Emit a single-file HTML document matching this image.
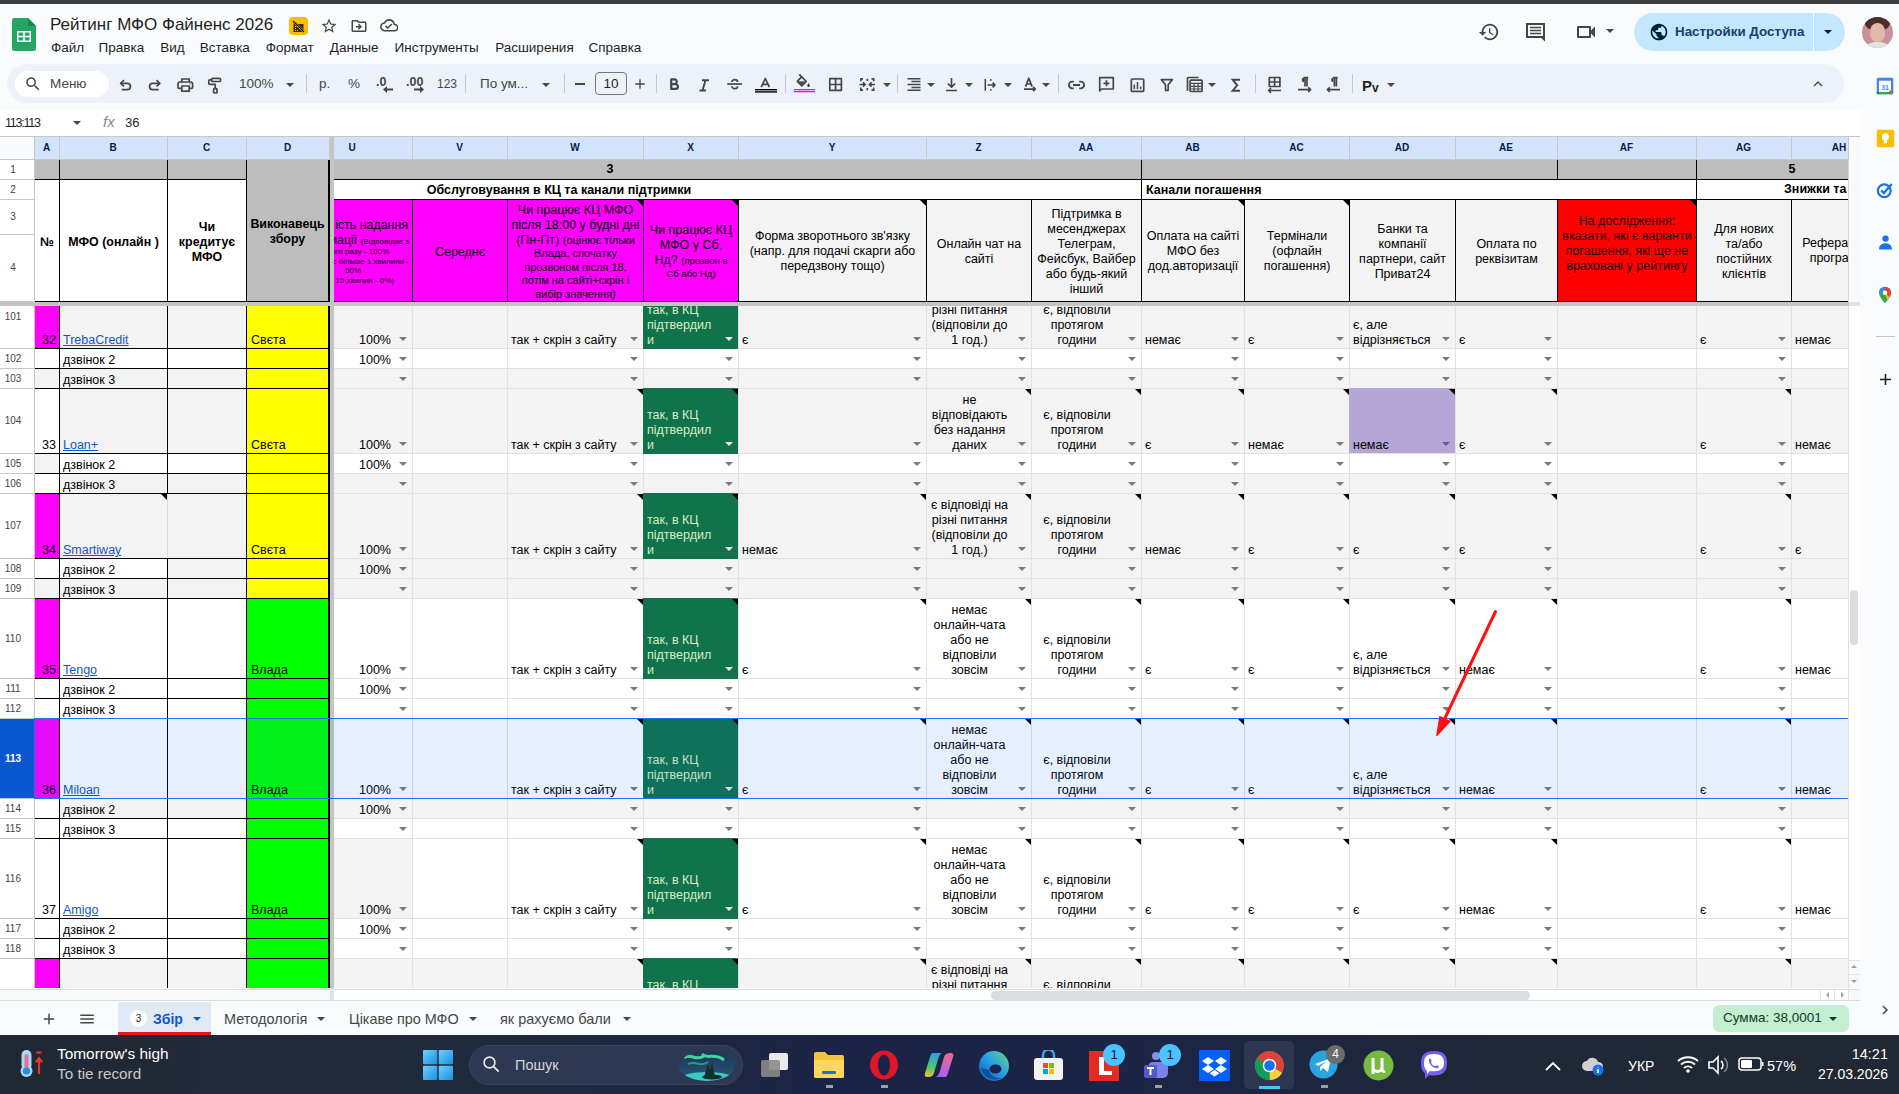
<!DOCTYPE html><html><head><meta charset="utf-8"><title>Sheets</title><style>
*{margin:0;padding:0;box-sizing:border-box}
html,body{width:1899px;height:1094px;overflow:hidden;background:#f9fbfd;font-family:"Liberation Sans",sans-serif;position:relative}
.a{position:absolute}
.t{position:absolute;display:flex;flex-direction:column;font-size:12.5px;line-height:15px;color:#000;overflow:hidden;white-space:normal}
.dd{position:absolute;width:0;height:0;border-left:4px solid transparent;border-right:4px solid transparent;border-top:4px solid #7a7a7a}
.cm{position:absolute;width:0;height:0;border-left:6px solid transparent;border-top:6px solid #000}
.ui{position:absolute;font-family:"Liberation Sans",sans-serif;color:#1f1f1f;white-space:nowrap}
</style></head><body>
<div style="position:absolute;left:0px;top:0px;width:1899px;height:4px;background:#3c3c3c;"></div>
<div style="position:absolute;left:0px;top:4px;width:1899px;height:1px;background:#ffffff;"></div>
<div style="position:absolute;left:0px;top:110px;width:1860px;height:26px;background:#ffffff;"></div>
<svg class="a" style="left:12px;top:18px" width="24" height="33" viewBox="0 0 24 33"><path d="M2.5 0H16l8 8v22.5A2.5 2.5 0 0 1 21.5 33h-19A2.5 2.5 0 0 1 0 30.5v-28A2.5 2.5 0 0 1 2.5 0z" fill="#23a566"/><path d="M16 0v8h8z" fill="#16884a"/><path d="M5 13h14v11H5z M6.5 14.5v3.2h4.7v-3.2z M12.8 14.5v3.2h4.7v-3.2z M6.5 19.3v3.2h4.7v-3.2z M12.8 19.3v3.2h4.7v-3.2z" fill="#fff" fill-rule="evenodd"/></svg>
<div class="ui" style="left:50px;top:15px;font-size:17px;line-height:17px;color:#1f1f1f;line-height:20px">Рейтинг МФО Файненс 2026</div>
<div class="a" style="left:289px;top:17px;width:19px;height:18px;border-radius:4px;background:#fbbc04"></div>
<svg class="a" style="left:292px;top:20px" width="13" height="13" viewBox="0 0 13 13"><path d="M1.5 2.5h3l1 1.5h6v8h-10z" fill="#3c2f00"/><path d="M1 1l11 11" stroke="#fbbc04" stroke-width="2.2"/><path d="M1 1l11 11" stroke="#111" stroke-width="1.2"/><path d="M3 6h1v1H3zM5 6h1v1H5zM3 8h1v1H3zM7 8h1v1H7zM3 10h1v1H3zM5 10h1v1H5z" fill="#fbbc04"/></svg>
<svg class="a" style="left:320px;top:17px" width="18" height="18" viewBox="0 0 24 24"><path d="M22 9.24l-7.19-.62L12 2 9.19 8.63 2 9.24l5.46 4.73L5.82 21 12 17.27 18.18 21l-1.63-7.03L22 9.24zM12 15.4l-3.76 2.27 1-4.28-3.32-2.88 4.38-.38L12 6.1l1.71 4.04 4.38.38-3.32 2.88 1 4.28L12 15.4z" fill="#444746" /></svg>
<svg class="a" style="left:349.5px;top:16.5px" width="18" height="18" viewBox="0 0 24 24"><path d="M20 6h-8l-2-2H4c-1.1 0-1.99.9-1.99 2L2 18c0 1.1.9 2 2 2h16c1.1 0 2-.9 2-2V8c0-1.1-.9-2-2-2zm0 12H4V6h5.17l2 2H20v10zm-7.84-6H8v2h4.16l-1.59 1.59L11.99 17 16 13.01 11.99 9l-1.41 1.41L12.16 12z" fill="#444746" /></svg>
<svg class="a" style="left:379.5px;top:16px" width="18.5" height="18.5" viewBox="0 0 24 24"><path d="M19.35 10.04C18.67 6.59 15.64 4 12 4 9.11 4 6.6 5.64 5.35 8.04 2.34 8.36 0 10.91 0 14c0 3.31 2.69 6 6 6h13c2.76 0 5-2.24 5-5 0-2.64-2.05-4.78-4.65-4.96zM19 18H6c-2.21 0-4-1.79-4-4 0-2.05 1.53-3.76 3.56-3.97l1.07-.11.5-.95C8.08 7.14 9.94 6 12 6c2.62 0 4.88 1.86 5.39 4.43l.3 1.5 1.53.11c1.56.1 2.78 1.41 2.78 2.96 0 1.65-1.35 3-3 3zm-9-3.82l-2.09-2.09L6.5 13.5 10 17l6.01-6.01-1.41-1.41z" fill="#444746" /></svg>
<div class="ui" style="left:51px;top:40px;font-size:13.5px;line-height:13.5px;color:#1f1f1f;line-height:16px">Файл</div>
<div class="ui" style="left:98.6px;top:40px;font-size:13.5px;line-height:13.5px;color:#1f1f1f;line-height:16px">Правка</div>
<div class="ui" style="left:160.3px;top:40px;font-size:13.5px;line-height:13.5px;color:#1f1f1f;line-height:16px">Вид</div>
<div class="ui" style="left:199.7px;top:40px;font-size:13.5px;line-height:13.5px;color:#1f1f1f;line-height:16px">Вставка</div>
<div class="ui" style="left:265.8px;top:40px;font-size:13.5px;line-height:13.5px;color:#1f1f1f;line-height:16px">Формат</div>
<div class="ui" style="left:329.8px;top:40px;font-size:13.5px;line-height:13.5px;color:#1f1f1f;line-height:16px">Данные</div>
<div class="ui" style="left:394.5px;top:40px;font-size:13.5px;line-height:13.5px;color:#1f1f1f;line-height:16px">Инструменты</div>
<div class="ui" style="left:495.2px;top:40px;font-size:13.5px;line-height:13.5px;color:#1f1f1f;line-height:16px">Расширения</div>
<div class="ui" style="left:588.4px;top:40px;font-size:13.5px;line-height:13.5px;color:#1f1f1f;line-height:16px">Справка</div>
<svg class="a" style="left:1478px;top:21px" width="22" height="22" viewBox="0 0 24 24"><path d="M13 3c-4.97 0-9 4.03-9 9H1l3.89 3.89.07.14L9 12H6c0-3.87 3.13-7 7-7s7 3.13 7 7-3.13 7-7 7c-1.93 0-3.68-.79-4.94-2.06l-1.42 1.42C8.27 19.99 10.51 21 13 21c4.97 0 9-4.03 9-9s-4.03-9-9-9zm-1 5v5l4.28 2.54.72-1.21-3.5-2.08V8H12z" fill="#444746" /></svg>
<svg class="a" style="left:1520px;top:18px" width="30" height="28" viewBox="1520 18 30 28"><path d="M1527 24 H1544 V37 H1527 Z" fill="none" stroke="#444746" stroke-width="2"/><path d="M1530 27.5 H1541 M1530 30.5 H1541 M1530 33.5 H1541" stroke="#444746" stroke-width="1.6"/><path d="M1540 37 H1545 V41.5 Z" fill="#444746"/></svg>
<svg class="a" style="left:1574px;top:20px" width="24" height="24" viewBox="0 0 24 24"><path d="M17 10.5V7c0-.55-.45-1-1-1H4c-.55 0-1 .45-1 1v10c0 .55.45 1 1 1h12c.55 0 1-.45 1-1v-3.5l4 4v-11l-4 4zM15 16H5V8h10v8z" fill="#444746" /></svg>
<div class="a" style="left:1606px;top:29px;width:0;height:0;border-left:4px solid transparent;border-right:4px solid transparent;border-top:4px solid #444746"></div>
<div class="a" style="left:1634px;top:13px;width:211px;height:38px;border-radius:19px;background:#c2e7ff"></div>
<div style="position:absolute;left:1813px;top:13px;width:1px;height:38px;background:#f9fbfd;"></div>
<svg class="a" style="left:1649px;top:22px" width="20" height="20" viewBox="0 0 24 24"><path d="M12 2C6.48 2 2 6.48 2 12s4.48 10 10 10 10-4.48 10-10S17.52 2 12 2zm-1 17.93c-3.95-.49-7-3.85-7-7.93 0-.62.08-1.21.21-1.79L9 15v1c0 1.1.9 2 2 2v1.93zm6.9-2.54c-.26-.81-1-1.39-1.9-1.39h-1v-3c0-.55-.45-1-1-1H8v-2h2c.55 0 1-.45 1-1V7h2c1.1 0 2-.9 2-2v-.41c2.93 1.19 5 4.06 5 7.41 0 2.08-.8 3.97-2.1 5.39z" fill="#001d35" /></svg>
<div class="ui" style="left:1675px;top:24px;font-size:13.4px;line-height:13.4px;color:#17406c;font-weight:bold;line-height:16px">Настройки Доступа</div>
<div class="a" style="left:1824px;top:30px;width:0;height:0;border-left:4px solid transparent;border-right:4px solid transparent;border-top:4px solid #001d35"></div>
<div class="a" style="left:1862px;top:17px;width:31px;height:31px;border-radius:50%;overflow:hidden;background:#c9929a"><div class="a" style="left:3px;top:-2px;width:25px;height:16px;border-radius:50%;background:#4a3028"></div><div class="a" style="left:8px;top:6px;width:15px;height:19px;border-radius:45%;background:#e2b8a8"></div><div class="a" style="left:4px;top:25px;width:23px;height:10px;border-radius:50% 50% 0 0;background:#d8e6e0"></div></div>
<div class="a" style="left:7px;top:64px;width:1837px;height:39px;border-radius:20px;background:#edf2fa"></div>
<div class="a" style="left:15px;top:71px;width:94px;height:26px;border-radius:13px;background:#fff"></div>
<svg class="a" style="left:24px;top:75px" width="18" height="18" viewBox="0 0 24 24"><path d="M15.5 14h-.79l-.28-.27C15.41 12.59 16 11.11 16 9.5 16 5.91 13.09 3 9.5 3S3 5.91 3 9.5 5.91 16 9.5 16c1.61 0 3.09-.59 4.23-1.57l.27.28v.79l5 4.99L20.49 19l-4.99-5zm-6 0C7.01 14 5 11.99 5 9.5S7.01 5 9.5 5 14 7.01 14 9.5 11.99 14 9.5 14z" fill="#444746" /></svg>
<div class="ui" style="left:50px;top:76px;font-size:13.5px;line-height:13.5px;color:#444746;line-height:16px">Меню</div>
<svg class="a" style="left:0;top:0" width="1899" height="110" viewBox="0 0 1899 110"><path d="M124 80.2 L120.6 83.3 L124 86.4" fill="none" stroke="#444746" stroke-width="1.7" stroke-linecap="butt" stroke-linejoin="round"/><path d="M121 83.3 H127.3 A3.15 3.15 0 0 1 127.3 89.6 H121.8" fill="none" stroke="#444746" stroke-width="1.7" stroke-linecap="butt" stroke-linejoin="round"/><path d="M156.5 80.2 L159.9 83.3 L156.5 86.4" fill="none" stroke="#444746" stroke-width="1.7" stroke-linecap="butt" stroke-linejoin="round"/><path d="M159.5 83.3 H152.7 A3.15 3.15 0 0 0 152.7 89.6 H158.7" fill="none" stroke="#444746" stroke-width="1.7" stroke-linecap="butt" stroke-linejoin="round"/><path d="M181.8 82 V79 H189.2 V82" fill="none" stroke="#444746" stroke-width="1.7" stroke-linecap="butt" stroke-linejoin="round"/><path d="M181.5 88.3 H179 A1 1 0 0 1 178 87.3 V83.8 A1.8 1.8 0 0 1 179.8 82 H190.8 A1.8 1.8 0 0 1 192.6 83.8 V87.3 A1 1 0 0 1 191.6 88.3 H189.2" fill="none" stroke="#444746" stroke-width="1.7" stroke-linecap="butt" stroke-linejoin="round"/><path d="M181.8 86 H189.2 V91.2 H181.8 Z" fill="none" stroke="#444746" stroke-width="1.7" stroke-linecap="butt" stroke-linejoin="round"/><rect x="189.5" y="83.3" width="1.2" height="1" fill="#444746"/><rect x="211.7" y="78.3" width="8.8" height="3.2" rx="1" fill="none" stroke="#444746" stroke-width="1.7" stroke-linecap="butt" stroke-linejoin="round"/><path d="M211.7 79.9 H209.6 A0.8 0.8 0 0 0 208.8 80.7 V83.6 A0.8 0.8 0 0 0 209.6 84.4 H215.2 V88.6" fill="none" stroke="#444746" stroke-width="1.7" stroke-linecap="butt" stroke-linejoin="round"/><rect x="213.6" y="88.6" width="3.4" height="4.4" rx="0.8" fill="none" stroke="#444746" stroke-width="1.7" stroke-linecap="butt" stroke-linejoin="round"/><path d="M671.2 79.3 H675 A2.5 2.5 0 0 1 675 84.1 H671.2 Z M671.2 84.1 H675.6 A2.4 2.4 0 0 1 675.6 88.9 H671.2 Z" fill="none" stroke="#444746" stroke-width="2.2" stroke-linejoin="round"/><path d="M702 80.2 H709 M699.5 90.5 H706 M705.5 80.2 L702.5 90.5" fill="none" stroke="#444746" stroke-width="1.9"/><path d="M727.3 84 H742" fill="none" stroke="#444746" stroke-width="1.7" stroke-linecap="butt" stroke-linejoin="round"/><path d="M731.8 82 A2.9 2.4 0 0 1 737.6 82" fill="none" stroke="#444746" stroke-width="1.7" stroke-linecap="butt" stroke-linejoin="round"/><path d="M731.8 86.2 A2.9 2.4 0 0 0 737.6 86.2" fill="none" stroke="#444746" stroke-width="1.7" stroke-linecap="butt" stroke-linejoin="round"/><path d="M761.2 87.2 L765.3 78.5 L769.4 87.2 M762.6 84.3 H768" fill="none" stroke="#444746" stroke-width="1.7" stroke-linecap="butt" stroke-linejoin="round"/><rect x="755" y="89" width="22" height="1.4" fill="#000"/><rect x="755" y="91.2" width="22" height="1.4" fill="#000"/><path d="M799.3 74.3 L806.2 81.5 L801.8 85.8 L797.3 81.3 L801.3 77.2" fill="none" stroke="#444746" stroke-width="1.7" stroke-linecap="butt" stroke-linejoin="round"/><path d="M797.8 81.3 L801.8 85.2 L805.6 81.5 Z" fill="#444746"/><path d="M808.6 83.1 C807.5 84.6 807.3 85.2 807.3 85.8 A1.3 1.3 0 0 0 809.9 85.8 C809.9 85.2 809.7 84.6 808.6 83.1 Z" fill="#444746"/><rect x="794" y="89" width="21" height="1.3" fill="#ff00ff"/><rect x="794" y="91" width="21" height="1.3" fill="#ff00ff"/><rect x="829.8" y="78.7" width="11.6" height="11.6" fill="none" stroke="#444746" stroke-width="1.7" stroke-linecap="butt" stroke-linejoin="round"/><path d="M835.6 78.7 V90.3 M829.8 84.5 H841.4" fill="none" stroke="#444746" stroke-width="1.7" stroke-linecap="butt" stroke-linejoin="round"/><path d="M863 78.8 H860.8 V81.3 M860.8 87.6 V90.2 H863 M871.5 78.8 H873.7 V81.3 M873.7 87.6 V90.2 H871.5" fill="none" stroke="#444746" stroke-width="1.7" stroke-linecap="butt" stroke-linejoin="round"/><path d="M859.5 84.5 H865 M863 82.3 L865.2 84.5 L863 86.7 M875 84.5 H869.5 M871.5 82.3 L869.3 84.5 L871.5 86.7" fill="none" stroke="#444746" stroke-width="1.7" stroke-linecap="butt" stroke-linejoin="round"/><path d="M867.3 78.8 V81 M867.3 88 V90.2" fill="none" stroke="#444746" stroke-width="1.7" stroke-linecap="butt" stroke-linejoin="round"/><path d="M907.5 78.7 H920.5 M911.5 81.6 H920.5 M907.5 84.5 H920.5 M911.5 87.4 H920.5 M907.5 90.2 H920.5" fill="none" stroke="#444746" stroke-width="1.5"/><path d="M951.5 78 V87 M947.8 83.5 L951.5 87.2 L955.2 83.5 M946 90.5 H957" fill="none" stroke="#444746" stroke-width="1.7" stroke-linecap="butt" stroke-linejoin="round"/><path d="M985.3 79 V90.7" fill="none" stroke="#444746" stroke-width="1.6"/><path d="M990.8 79 V81 M990.8 89 V90.7" fill="none" stroke="#444746" stroke-width="1.4"/><path d="M987.5 85 H994.8 M992.6 82.6 L995 85 L992.6 87.4" fill="none" stroke="#444746" stroke-width="1.7" stroke-linecap="butt" stroke-linejoin="round"/><path d="M1025.5 86.6 L1028.8 78.2 L1032.1 86.6 M1026.6 84 H1031" fill="none" stroke="#444746" stroke-width="1.7" stroke-linecap="butt" stroke-linejoin="round"/><path d="M1024 89.1 H1035 M1033 87 L1035.3 89.1 L1033 91.2" fill="none" stroke="#444746" stroke-width="1.7" stroke-linecap="butt" stroke-linejoin="round"/><path d="M1073.8 81.6 H1072.3 A3.4 3.4 0 0 0 1072.3 88.4 H1073.8 M1079.2 81.6 H1080.7 A3.4 3.4 0 0 1 1080.7 88.4 H1079.2 M1073 85 H1080" fill="none" stroke="#444746" stroke-width="1.9"/><path d="M1099.7 90.8 V77.7 H1113.3 V89 H1101.6 Z" fill="none" stroke="#444746" stroke-width="1.7" stroke-linecap="butt" stroke-linejoin="round"/><path d="M1106.5 80.3 V86.3 M1103.5 83.3 H1109.5" fill="none" stroke="#444746" stroke-width="1.7" stroke-linecap="butt" stroke-linejoin="round"/><rect x="1131.3" y="79" width="12.4" height="12.4" rx="1" fill="none" stroke="#444746" stroke-width="1.7" stroke-linecap="butt" stroke-linejoin="round"/><path d="M1134.3 84.5 V89.2 M1137.5 82 V89.2 M1140.7 86.6 V89.2" fill="none" stroke="#444746" stroke-width="1.5"/><path d="M1161.3 79.6 H1172.4 L1168.2 84.8 V90.3 H1165.5 V84.8 Z" fill="none" stroke="#444746" stroke-width="1.7" stroke-linecap="butt" stroke-linejoin="round"/><path d="M1187.5 90.7 V78.3 A0.8 0.8 0 0 1 1188.3 77.5 H1198.6" fill="none" stroke="#444746" stroke-width="1.7" stroke-linecap="butt" stroke-linejoin="round"/><rect x="1190.1" y="80.2" width="12" height="11.3" rx="1" fill="none" stroke="#444746" stroke-width="1.7" stroke-linecap="butt" stroke-linejoin="round"/><path d="M1190.1 83.3 H1202.1 M1190.1 86.3 H1202.1 M1190.1 89 H1202.1 M1194.1 83.3 V91.5 M1198.1 83.3 V91.5" fill="none" stroke="#444746" stroke-width="1.2"/><path d="M1240 79.7 H1232.6 L1237.2 85.3 L1232.6 90.7 H1240" fill="none" stroke="#444746" stroke-width="1.9"/><rect x="1269.3" y="77.5" width="10.6" height="9" fill="none" stroke="#444746" stroke-width="1.7" stroke-linecap="butt" stroke-linejoin="round"/><path d="M1274.6 77.5 V86.5 M1269.3 82 H1279.9" fill="none" stroke="#444746" stroke-width="1.7" stroke-linecap="butt" stroke-linejoin="round"/><path d="M1268.6 90.5 H1281 M1271 88.2 L1268.6 90.5 L1271 92.8" fill="none" stroke="#444746" stroke-width="1.7" stroke-linecap="butt" stroke-linejoin="round"/><path d="M1303.6 77.6 H1308.3 M1305 77.6 V86.4 M1307 77.6 V86.4" fill="none" stroke="#444746" stroke-width="1.7" stroke-linecap="butt" stroke-linejoin="round"/><path d="M1304 77.6 A2.3 2.3 0 0 0 1304 82.2 Z" fill="#444746"/><path d="M1298 89.6 H1310.5 M1308.2 87.3 L1310.6 89.6 L1308.2 91.9" fill="none" stroke="#444746" stroke-width="1.7" stroke-linecap="butt" stroke-linejoin="round"/><path d="M1333 77.6 H1337.7 M1334.4 77.6 V86.4 M1336.4 77.6 V86.4" fill="none" stroke="#444746" stroke-width="1.7" stroke-linecap="butt" stroke-linejoin="round"/><path d="M1333.4 77.6 A2.3 2.3 0 0 0 1333.4 82.2 Z" fill="#444746"/><path d="M1340 89.6 H1327.5 M1329.8 87.3 L1327.4 89.6 L1329.8 91.9" fill="none" stroke="#444746" stroke-width="1.7" stroke-linecap="butt" stroke-linejoin="round"/></svg>
<div class="ui" style="left:239px;top:77px;font-size:13.5px;line-height:13.5px;color:#444746;line-height:14px">100%</div>
<div class="a" style="left:286px;top:83px;width:0;height:0;border-left:4px solid transparent;border-right:4px solid transparent;border-top:4px solid #444746"></div>
<div style="position:absolute;left:306px;top:74px;width:1px;height:19px;background:#c7c7c7;"></div>
<div class="ui" style="left:319px;top:77px;font-size:13.5px;line-height:13.5px;color:#444746;line-height:14px">р.</div>
<div class="ui" style="left:348px;top:77px;font-size:13.5px;line-height:13.5px;color:#444746;line-height:14px">%</div>
<div class="ui" style="left:376px;top:76px;font-size:12.5px;line-height:12.5px;color:#444746;line-height:13px;font-weight:bold">.0</div>
<svg class="a" style="left:383px;top:86px" width="10" height="7" viewBox="0 0 10 7"><path d="M4 0L0 3.5 4 7V4.5h6v-2H4z" fill="#444746" /></svg>
<div class="ui" style="left:406px;top:76px;font-size:12.5px;line-height:12.5px;color:#444746;line-height:13px;font-weight:bold">.00</div>
<svg class="a" style="left:414px;top:86px" width="10" height="7" viewBox="0 0 10 7"><path d="M6 0l4 3.5L6 7V4.5H0v-2h6z" fill="#444746" /></svg>
<div class="ui" style="left:437px;top:78px;font-size:12px;line-height:12px;color:#444746;line-height:13px">123</div>
<div style="position:absolute;left:465px;top:74px;width:1px;height:19px;background:#c7c7c7;"></div>
<div class="ui" style="left:480px;top:77px;font-size:13.5px;line-height:13.5px;color:#444746;line-height:14px">По ум...</div>
<div class="a" style="left:542px;top:83px;width:0;height:0;border-left:4px solid transparent;border-right:4px solid transparent;border-top:4px solid #444746"></div>
<div style="position:absolute;left:564px;top:74px;width:1px;height:19px;background:#c7c7c7;"></div>
<div style="position:absolute;left:575px;top:83px;width:10px;height:2px;background:#444746;"></div>
<div class="a" style="left:595px;top:72px;width:32px;height:23px;border:1px solid #747775;border-radius:4px;font-size:13.5px;line-height:21px;text-align:center;color:#1f1f1f">10</div>
<svg class="a" style="left:632px;top:76px" width="16" height="16" viewBox="0 0 24 24"><path d="M19 13h-6v6h-2v-6H5v-2h6V5h2v6h6v2z" fill="#444746" /></svg>
<div style="position:absolute;left:656px;top:74px;width:1px;height:19px;background:#c7c7c7;"></div>
<div style="position:absolute;left:785px;top:74px;width:1px;height:19px;background:#c7c7c7;"></div>
<div class="a" style="left:883px;top:83px;width:0;height:0;border-left:4px solid transparent;border-right:4px solid transparent;border-top:4px solid #444746"></div>
<div style="position:absolute;left:897px;top:74px;width:1px;height:19px;background:#c7c7c7;"></div>
<div class="a" style="left:927px;top:83px;width:0;height:0;border-left:4px solid transparent;border-right:4px solid transparent;border-top:4px solid #444746"></div>
<div class="a" style="left:965px;top:83px;width:0;height:0;border-left:4px solid transparent;border-right:4px solid transparent;border-top:4px solid #444746"></div>
<div class="a" style="left:1004px;top:83px;width:0;height:0;border-left:4px solid transparent;border-right:4px solid transparent;border-top:4px solid #444746"></div>
<div class="a" style="left:1042px;top:83px;width:0;height:0;border-left:4px solid transparent;border-right:4px solid transparent;border-top:4px solid #444746"></div>
<div style="position:absolute;left:1058px;top:74px;width:1px;height:19px;background:#c7c7c7;"></div>
<div class="a" style="left:1208px;top:83px;width:0;height:0;border-left:4px solid transparent;border-right:4px solid transparent;border-top:4px solid #444746"></div>
<div style="position:absolute;left:1255px;top:74px;width:1px;height:19px;background:#c7c7c7;"></div>
<div style="position:absolute;left:1352px;top:74px;width:1px;height:19px;background:#c7c7c7;"></div>
<div class="ui" style="left:1362px;top:79px;font-size:15px;line-height:15px;color:#1f1f1f;font-weight:bold;line-height:14px">P</div>
<div class="ui" style="left:1372px;top:82px;font-size:12px;line-height:12px;color:#1f1f1f;font-weight:bold;line-height:12px">v</div>
<div class="a" style="left:1387px;top:83px;width:0;height:0;border-left:4px solid transparent;border-right:4px solid transparent;border-top:4px solid #444746"></div>
<svg class="a" style="left:1809px;top:75px" width="18" height="18" viewBox="0 0 24 24"><path d="M12 8l-6 6 1.41 1.41L12 10.83l4.59 4.58L18 14z" fill="#444746" /></svg>
<div class="ui" style="left:5px;top:116px;font-size:12.5px;line-height:12.5px;color:#1f1f1f;line-height:14px;letter-spacing:-1.25px">113:113</div>
<div class="a" style="left:73px;top:121px;width:0;height:0;border-left:4px solid transparent;border-right:4px solid transparent;border-top:4px solid #444746"></div>
<div class="ui" style="left:103px;top:114px;font-size:15px;line-height:15px;color:#8a8a8a;font-style:italic;font-family:"Liberation Serif",serif;line-height:16px">fx</div>
<div class="ui" style="left:125px;top:116px;font-size:13px;line-height:13px;color:#1f1f1f;line-height:14px">36</div>
<div style="position:absolute;left:0px;top:136px;width:1849px;height:852px;background:#ffffff;"></div>
<div style="position:absolute;left:0px;top:136px;width:1860px;height:1px;background:#c7c7c7;"></div>
<div style="position:absolute;left:34px;top:137px;width:1815px;height:22px;background:#d3e3fd;"></div>
<div style="position:absolute;left:0px;top:137px;width:34px;height:22px;background:#f8f9fa;"></div>
<div style="position:absolute;left:0px;top:159px;width:1849px;height:1px;background:#c7c7c7;"></div>
<div style="position:absolute;left:59px;top:137px;width:1px;height:22px;background:#c7c7c7;"></div>
<div class="ui" style="left:16.5px;top:137px;width:60px;height:22px;line-height:22px;text-align:center;font-size:10px;font-weight:bold;color:#041e49">A</div>
<div style="position:absolute;left:167px;top:137px;width:1px;height:22px;background:#c7c7c7;"></div>
<div class="ui" style="left:83.0px;top:137px;width:60px;height:22px;line-height:22px;text-align:center;font-size:10px;font-weight:bold;color:#041e49">B</div>
<div style="position:absolute;left:246px;top:137px;width:1px;height:22px;background:#c7c7c7;"></div>
<div class="ui" style="left:176.5px;top:137px;width:60px;height:22px;line-height:22px;text-align:center;font-size:10px;font-weight:bold;color:#041e49">C</div>
<div style="position:absolute;left:329px;top:137px;width:1px;height:22px;background:#c7c7c7;"></div>
<div class="ui" style="left:257.5px;top:137px;width:60px;height:22px;line-height:22px;text-align:center;font-size:10px;font-weight:bold;color:#041e49">D</div>
<div style="position:absolute;left:412px;top:137px;width:1px;height:22px;background:#c7c7c7;"></div>
<div class="ui" style="left:322px;top:137px;width:60px;height:22px;line-height:22px;text-align:center;font-size:10px;font-weight:bold;color:#041e49">U</div>
<div style="position:absolute;left:507px;top:137px;width:1px;height:22px;background:#c7c7c7;"></div>
<div class="ui" style="left:429.5px;top:137px;width:60px;height:22px;line-height:22px;text-align:center;font-size:10px;font-weight:bold;color:#041e49">V</div>
<div style="position:absolute;left:643px;top:137px;width:1px;height:22px;background:#c7c7c7;"></div>
<div class="ui" style="left:545.0px;top:137px;width:60px;height:22px;line-height:22px;text-align:center;font-size:10px;font-weight:bold;color:#041e49">W</div>
<div style="position:absolute;left:738px;top:137px;width:1px;height:22px;background:#c7c7c7;"></div>
<div class="ui" style="left:660.5px;top:137px;width:60px;height:22px;line-height:22px;text-align:center;font-size:10px;font-weight:bold;color:#041e49">X</div>
<div style="position:absolute;left:926px;top:137px;width:1px;height:22px;background:#c7c7c7;"></div>
<div class="ui" style="left:802.0px;top:137px;width:60px;height:22px;line-height:22px;text-align:center;font-size:10px;font-weight:bold;color:#041e49">Y</div>
<div style="position:absolute;left:1031px;top:137px;width:1px;height:22px;background:#c7c7c7;"></div>
<div class="ui" style="left:948.5px;top:137px;width:60px;height:22px;line-height:22px;text-align:center;font-size:10px;font-weight:bold;color:#041e49">Z</div>
<div style="position:absolute;left:1141px;top:137px;width:1px;height:22px;background:#c7c7c7;"></div>
<div class="ui" style="left:1056.0px;top:137px;width:60px;height:22px;line-height:22px;text-align:center;font-size:10px;font-weight:bold;color:#041e49">AA</div>
<div style="position:absolute;left:1244px;top:137px;width:1px;height:22px;background:#c7c7c7;"></div>
<div class="ui" style="left:1162.5px;top:137px;width:60px;height:22px;line-height:22px;text-align:center;font-size:10px;font-weight:bold;color:#041e49">AB</div>
<div style="position:absolute;left:1349px;top:137px;width:1px;height:22px;background:#c7c7c7;"></div>
<div class="ui" style="left:1266.5px;top:137px;width:60px;height:22px;line-height:22px;text-align:center;font-size:10px;font-weight:bold;color:#041e49">AC</div>
<div style="position:absolute;left:1455px;top:137px;width:1px;height:22px;background:#c7c7c7;"></div>
<div class="ui" style="left:1372.0px;top:137px;width:60px;height:22px;line-height:22px;text-align:center;font-size:10px;font-weight:bold;color:#041e49">AD</div>
<div style="position:absolute;left:1557px;top:137px;width:1px;height:22px;background:#c7c7c7;"></div>
<div class="ui" style="left:1476.0px;top:137px;width:60px;height:22px;line-height:22px;text-align:center;font-size:10px;font-weight:bold;color:#041e49">AE</div>
<div style="position:absolute;left:1696px;top:137px;width:1px;height:22px;background:#c7c7c7;"></div>
<div class="ui" style="left:1596.5px;top:137px;width:60px;height:22px;line-height:22px;text-align:center;font-size:10px;font-weight:bold;color:#041e49">AF</div>
<div style="position:absolute;left:1791px;top:137px;width:1px;height:22px;background:#c7c7c7;"></div>
<div class="ui" style="left:1713.5px;top:137px;width:60px;height:22px;line-height:22px;text-align:center;font-size:10px;font-weight:bold;color:#041e49">AG</div>
<div style="position:absolute;left:1848px;top:137px;width:1px;height:22px;background:#c7c7c7;"></div>
<div class="ui" style="left:1809px;top:137px;width:60px;height:22px;line-height:22px;text-align:center;font-size:10px;font-weight:bold;color:#041e49">AH</div>
<div style="position:absolute;left:34px;top:137px;width:1px;height:22px;background:#c7c7c7;"></div>
<div style="position:absolute;left:0px;top:160px;width:34px;height:20px;background:#ffffff;"></div>
<div style="position:absolute;left:0px;top:179px;width:34px;height:1px;background:#c7c7c7;"></div>
<div class="ui" style="left:0;top:160px;width:34px;height:20px;display:flex;align-items:center;justify-content:center;font-size:10px;color:#444;padding-right:8px;padding-bottom:2px">1</div>
<div style="position:absolute;left:0px;top:180px;width:34px;height:20px;background:#ffffff;"></div>
<div style="position:absolute;left:0px;top:199px;width:34px;height:1px;background:#c7c7c7;"></div>
<div class="ui" style="left:0;top:180px;width:34px;height:20px;display:flex;align-items:center;justify-content:center;font-size:10px;color:#444;padding-right:8px;padding-bottom:2px">2</div>
<div style="position:absolute;left:0px;top:200px;width:34px;height:35px;background:#ffffff;"></div>
<div style="position:absolute;left:0px;top:234px;width:34px;height:1px;background:#c7c7c7;"></div>
<div class="ui" style="left:0;top:200px;width:34px;height:35px;display:flex;align-items:center;justify-content:center;font-size:10px;color:#444;padding-right:8px;padding-bottom:2px">3</div>
<div style="position:absolute;left:0px;top:235px;width:34px;height:67px;background:#ffffff;"></div>
<div style="position:absolute;left:0px;top:301px;width:34px;height:1px;background:#c7c7c7;"></div>
<div class="ui" style="left:0;top:235px;width:34px;height:67px;display:flex;align-items:center;justify-content:center;font-size:10px;color:#444;padding-right:8px;padding-bottom:2px">4</div>
<div style="position:absolute;left:34px;top:160px;width:1px;height:142px;background:#c7c7c7;"></div>
<div style="position:absolute;left:35px;top:160px;width:212px;height:19px;background:#bdbdbd;"></div>
<div style="position:absolute;left:35px;top:180px;width:211px;height:121px;background:#ffffff;"></div>
<div style="position:absolute;left:247px;top:160px;width:82px;height:141px;background:#bdbdbd;"></div>
<div style="position:absolute;left:35px;top:179px;width:212px;height:1px;background:#000;"></div>
<div style="position:absolute;left:59px;top:160px;width:1px;height:142px;background:#000;"></div>
<div style="position:absolute;left:167px;top:160px;width:1px;height:142px;background:#000;"></div>
<div style="position:absolute;left:246px;top:160px;width:1px;height:142px;background:#000;"></div>
<div style="position:absolute;left:328px;top:160px;width:2px;height:142px;background:#000;"></div>
<div style="position:absolute;left:35px;top:301px;width:295px;height:1px;background:#000;"></div>
<div class="t" style="left:35px;top:180px;width:24px;height:121px;justify-content:center;text-align:center;font-weight:bold;padding:3px 0 0 0">№</div>
<div class="t" style="left:60px;top:180px;width:107px;height:121px;justify-content:center;text-align:center;font-weight:bold;font-size:12.4px;line-height:15px;padding:3px 0 0 0">МФО (онлайн )</div>
<div class="t" style="left:168px;top:180px;width:78px;height:121px;justify-content:center;text-align:center;font-weight:bold;font-size:12.4px;line-height:15px;padding:4px 0 0 0">Чи<br>кредитує<br>МФО</div>
<div class="t" style="left:247px;top:160px;width:81px;height:141px;justify-content:center;text-align:center;font-weight:bold;font-size:12.4px;line-height:15px;padding:3px 0 0 0">Виконавець<br>збору</div>
<div style="position:absolute;left:330px;top:137px;width:4px;height:851px;background:#c4c4c4;"></div>
<div style="position:absolute;left:0px;top:302px;width:1849px;height:4px;background:#c4c4c4;"></div>
<div style="position:absolute;left:334px;top:160px;width:1514px;height:19px;background:#bdbdbd;"></div>
<div style="position:absolute;left:334px;top:180px;width:1514px;height:19px;background:#ffffff;"></div>
<div style="position:absolute;left:334px;top:179px;width:1514px;height:1px;background:#000;"></div>
<div style="position:absolute;left:334px;top:199px;width:1514px;height:1px;background:#000;"></div>
<div style="position:absolute;left:334px;top:301px;width:1514px;height:1px;background:#000;"></div>
<div style="position:absolute;left:1141px;top:160px;width:1px;height:40px;background:#000;"></div>
<div style="position:absolute;left:1557px;top:160px;width:1px;height:20px;background:#000;"></div>
<div style="position:absolute;left:1696px;top:160px;width:1px;height:40px;background:#000;"></div>
<div style="position:absolute;left:334px;top:200px;width:79px;height:101px;background:#ff00ff;"></div>
<div style="position:absolute;left:412px;top:199px;width:1px;height:103px;background:#000;"></div>
<div style="position:absolute;left:413px;top:200px;width:95px;height:101px;background:#ff00ff;"></div>
<div style="position:absolute;left:507px;top:199px;width:1px;height:103px;background:#000;"></div>
<div style="position:absolute;left:508px;top:200px;width:136px;height:101px;background:#ff00ff;"></div>
<div style="position:absolute;left:643px;top:199px;width:1px;height:103px;background:#000;"></div>
<div style="position:absolute;left:644px;top:200px;width:95px;height:101px;background:#ff00ff;"></div>
<div style="position:absolute;left:738px;top:199px;width:1px;height:103px;background:#000;"></div>
<div style="position:absolute;left:739px;top:200px;width:188px;height:101px;background:#f3f3f3;"></div>
<div style="position:absolute;left:926px;top:199px;width:1px;height:103px;background:#000;"></div>
<div style="position:absolute;left:927px;top:200px;width:105px;height:101px;background:#f3f3f3;"></div>
<div style="position:absolute;left:1031px;top:199px;width:1px;height:103px;background:#000;"></div>
<div style="position:absolute;left:1032px;top:200px;width:110px;height:101px;background:#f3f3f3;"></div>
<div style="position:absolute;left:1141px;top:199px;width:1px;height:103px;background:#000;"></div>
<div style="position:absolute;left:1142px;top:200px;width:103px;height:101px;background:#f3f3f3;"></div>
<div style="position:absolute;left:1244px;top:199px;width:1px;height:103px;background:#000;"></div>
<div style="position:absolute;left:1245px;top:200px;width:105px;height:101px;background:#f3f3f3;"></div>
<div style="position:absolute;left:1349px;top:199px;width:1px;height:103px;background:#000;"></div>
<div style="position:absolute;left:1350px;top:200px;width:106px;height:101px;background:#f3f3f3;"></div>
<div style="position:absolute;left:1455px;top:199px;width:1px;height:103px;background:#000;"></div>
<div style="position:absolute;left:1456px;top:200px;width:102px;height:101px;background:#f3f3f3;"></div>
<div style="position:absolute;left:1557px;top:199px;width:1px;height:103px;background:#000;"></div>
<div style="position:absolute;left:1558px;top:200px;width:139px;height:101px;background:#ff0000;"></div>
<div style="position:absolute;left:1696px;top:199px;width:1px;height:103px;background:#000;"></div>
<div style="position:absolute;left:1697px;top:200px;width:95px;height:101px;background:#f3f3f3;"></div>
<div style="position:absolute;left:1791px;top:199px;width:1px;height:103px;background:#000;"></div>
<div style="position:absolute;left:1792px;top:200px;width:57px;height:101px;background:#f3f3f3;"></div>
<div style="position:absolute;left:1848px;top:160px;width:1px;height:142px;background:#d9d9d9;"></div>
<div class="t" style="left:590px;top:160px;width:40px;height:19px;justify-content:center;text-align:center;font-weight:bold;padding:0;line-height:15px">3</div>
<div class="t" style="left:1772px;top:160px;width:40px;height:19px;justify-content:center;text-align:center;font-weight:bold;padding:0;line-height:15px">5</div>
<div class="t" style="left:400px;top:180px;width:318px;height:19px;justify-content:center;text-align:center;font-weight:bold;padding:1px 0 0 0;line-height:15px;white-space:nowrap">Обслуговування в КЦ та канали підтримки</div>
<div class="t" style="left:1142px;top:180px;width:300px;height:19px;justify-content:center;text-align:left;font-weight:bold;padding:1px 0 0 4px;line-height:15px;white-space:nowrap">Канали погашення</div>
<div class="a" style="left:1697px;top:180px;width:151px;height:19px;overflow:hidden"><div class="t" style="left:87px;top:0;width:200px;height:19px;justify-content:center;text-align:left;font-weight:bold;padding:0;line-height:15px;white-space:nowrap">Знижки та кешбек</div></div>
<div class="a" style="left:334px;top:200px;width:78px;height:101px;overflow:hidden"><div class="a" style="right:4px;white-space:nowrap;font-size:12.4px;line-height:15px;top:18px">ість надання</div><div class="a" style="right:3px;top:33px;white-space:nowrap;font-size:12.4px;line-height:15px">мації <span style="font-size:8px">(Відповідає з</span></div><div class="a" style="right:23px;top:47px;white-space:nowrap;font-size:8px;line-height:10px">ого разу - 100%</div><div class="a" style="right:3px;top:57px;white-space:nowrap;font-size:8px;line-height:10px">ас більше 1 хвилини -</div><div class="a" style="left:11px;top:66px;white-space:nowrap;font-size:8px;line-height:10px">50%</div><div class="a" style="right:18px;top:76px;white-space:nowrap;font-size:8px;line-height:10px">е 15 хвилин - 0%)</div></div>
<div class="t" style="left:413px;top:200px;width:94px;height:101px;justify-content:center;text-align:center;padding:0 2px 0px 2px;line-height:15px;"><div style="position:relative;top:1.5px">Середнє</div></div>
<div class="t" style="left:508px;top:200px;width:135px;height:101px;justify-content:flex-start;text-align:center;padding:3px 0 0 0;line-height:15px;overflow:hidden"><div>Чи працює КЦ МФО<br>після 18:00 у будні дні<br>(Пн-Пт) <span style="font-size:11px">(оцінює тільки</span></div><div style="font-size:11px;line-height:13.5px;margin-top:-1px">Влада, спочатку<br>прозвоном після 18,<br>потім на сайті+скрін і<br>вибір значення)</div></div>
<div class="t" style="left:644px;top:200px;width:94px;height:101px;justify-content:center;text-align:center;padding:1px 0 0 0;line-height:15px"><div>Чи працює КЦ<br>МФО у Сб,<br>Нд? <span style="font-size:9.5px">(прозвон в</span></div><div style="font-size:9.5px;line-height:11px">Сб або Нд)</div></div>
<div class="t" style="left:739px;top:200px;width:187px;height:101px;justify-content:center;text-align:center;padding:0 2px 0px 2px;line-height:15px;"><div style="position:relative;top:1px">Форма зворотнього зв'язку<br>(напр. для подачі скарги або<br>передзвону тощо)</div></div>
<div class="t" style="left:927px;top:200px;width:104px;height:101px;justify-content:center;text-align:center;padding:0 2px 0px 2px;line-height:15px;"><div style="position:relative;top:1px">Онлайн чат на<br>сайті</div></div>
<div class="t" style="left:1032px;top:200px;width:109px;height:101px;justify-content:center;text-align:center;padding:0 2px 0px 2px;line-height:15px;"><div style="position:relative;top:1.5px">Підтримка в<br>месенджерах<br>Телеграм,<br>Фейсбук, Вайбер<br>або будь-який<br>інший</div></div>
<div class="t" style="left:1142px;top:200px;width:102px;height:101px;justify-content:center;text-align:center;padding:0 2px 0px 2px;line-height:15px;"><div style="position:relative;top:1px">Оплата на сайті<br>МФО без<br>дод.авторизації</div></div>
<div class="t" style="left:1245px;top:200px;width:104px;height:101px;justify-content:center;text-align:center;padding:0 2px 0px 2px;line-height:15px;"><div style="position:relative;top:1px">Термінали<br>(офлайн<br>погашення)</div></div>
<div class="t" style="left:1350px;top:200px;width:105px;height:101px;justify-content:center;text-align:center;padding:0 2px 0px 2px;line-height:15px;"><div style="position:relative;top:1px">Банки та<br>компанії<br>партнери, сайт<br>Приват24</div></div>
<div class="t" style="left:1456px;top:200px;width:101px;height:101px;justify-content:center;text-align:center;padding:0 2px 0px 2px;line-height:15px;"><div style="position:relative;top:1px">Оплата по<br>реквізитам</div></div>
<div class="t" style="left:1558px;top:200px;width:138px;height:101px;justify-content:center;text-align:center;padding:0 2px 0px 2px;line-height:15px;color:#1a0000"><div style="position:relative;top:-7px">На дослідження:<br>вказати, які є варіанти<br>погашення, які ще не<br>враховані у рейтингу</div></div>
<div class="t" style="left:1697px;top:200px;width:94px;height:101px;justify-content:center;text-align:center;padding:0 2px 0px 2px;line-height:15px;"><div style="position:relative;top:1px">Для нових<br>та/або<br>постійних<br>клієнтів</div></div>
<div class="a" style="left:1792px;top:200px;width:56px;height:101px;overflow:hidden"><div class="t" style="left:-5px;top:0;width:100px;height:101px;justify-content:center;text-align:center;line-height:15px;padding:1px 0 0 0">Реферальні<br>програми</div></div>
<div class="cm" style="left:637px;top:200px"></div>
<div class="cm" style="left:732px;top:200px"></div>
<div class="cm" style="left:920px;top:200px"></div>
<div class="cm" style="left:1238px;top:200px"></div>
<div class="cm" style="left:1343px;top:200px"></div>
<div class="cm" style="left:1690px;top:200px"></div>
<div class="a" style="left:0;top:306px;width:1849px;height:682px;overflow:hidden">
<div style="position:absolute;left:0px;top:0px;width:34px;height:42px;background:#ffffff"></div>
<div style="position:absolute;left:0px;top:42px;width:34px;height:1px;background:#c7c7c7"></div>
<div style="position:absolute;left:35px;top:0px;width:24px;height:42px;background:#ff00ff"></div>
<div style="position:absolute;left:60px;top:0px;width:107px;height:42px;background:#f3f3f3"></div>
<div style="position:absolute;left:168px;top:0px;width:78px;height:42px;background:#f3f3f3"></div>
<div style="position:absolute;left:247px;top:0px;width:81px;height:42px;background:#ffff00"></div>
<div style="position:absolute;left:334px;top:0px;width:1514px;height:42px;background:#f3f3f3"></div>
<div style="position:absolute;left:0px;top:43px;width:34px;height:19px;background:#ffffff"></div>
<div style="position:absolute;left:0px;top:62px;width:34px;height:1px;background:#c7c7c7"></div>
<div style="position:absolute;left:35px;top:43px;width:24px;height:19px;background:#fff"></div>
<div style="position:absolute;left:60px;top:43px;width:107px;height:19px;background:#fff"></div>
<div style="position:absolute;left:168px;top:43px;width:78px;height:19px;background:#fff"></div>
<div style="position:absolute;left:247px;top:43px;width:81px;height:19px;background:#ffff00"></div>
<div style="position:absolute;left:334px;top:43px;width:1514px;height:19px;background:#fff"></div>
<div style="position:absolute;left:0px;top:63px;width:34px;height:19px;background:#ffffff"></div>
<div style="position:absolute;left:0px;top:82px;width:34px;height:1px;background:#c7c7c7"></div>
<div style="position:absolute;left:35px;top:63px;width:24px;height:19px;background:#f3f3f3"></div>
<div style="position:absolute;left:60px;top:63px;width:107px;height:19px;background:#f3f3f3"></div>
<div style="position:absolute;left:168px;top:63px;width:78px;height:19px;background:#f3f3f3"></div>
<div style="position:absolute;left:247px;top:63px;width:81px;height:19px;background:#ffff00"></div>
<div style="position:absolute;left:334px;top:63px;width:1514px;height:19px;background:#f3f3f3"></div>
<div style="position:absolute;left:0px;top:83px;width:34px;height:64px;background:#ffffff"></div>
<div style="position:absolute;left:0px;top:147px;width:34px;height:1px;background:#c7c7c7"></div>
<div style="position:absolute;left:35px;top:83px;width:24px;height:64px;background:#fff"></div>
<div style="position:absolute;left:60px;top:83px;width:107px;height:64px;background:#f3f3f3"></div>
<div style="position:absolute;left:168px;top:83px;width:78px;height:64px;background:#f3f3f3"></div>
<div style="position:absolute;left:247px;top:83px;width:81px;height:64px;background:#ffff00"></div>
<div style="position:absolute;left:334px;top:83px;width:1514px;height:64px;background:#f3f3f3"></div>
<div style="position:absolute;left:0px;top:148px;width:34px;height:19px;background:#ffffff"></div>
<div style="position:absolute;left:0px;top:167px;width:34px;height:1px;background:#c7c7c7"></div>
<div style="position:absolute;left:35px;top:148px;width:24px;height:19px;background:#f3f3f3"></div>
<div style="position:absolute;left:60px;top:148px;width:107px;height:19px;background:#fff"></div>
<div style="position:absolute;left:168px;top:148px;width:78px;height:19px;background:#fff"></div>
<div style="position:absolute;left:247px;top:148px;width:81px;height:19px;background:#ffff00"></div>
<div style="position:absolute;left:334px;top:148px;width:1514px;height:19px;background:#fff"></div>
<div style="position:absolute;left:0px;top:168px;width:34px;height:19px;background:#ffffff"></div>
<div style="position:absolute;left:0px;top:187px;width:34px;height:1px;background:#c7c7c7"></div>
<div style="position:absolute;left:35px;top:168px;width:24px;height:19px;background:#fff"></div>
<div style="position:absolute;left:60px;top:168px;width:107px;height:19px;background:#f3f3f3"></div>
<div style="position:absolute;left:168px;top:168px;width:78px;height:19px;background:#f3f3f3"></div>
<div style="position:absolute;left:247px;top:168px;width:81px;height:19px;background:#ffff00"></div>
<div style="position:absolute;left:334px;top:168px;width:1514px;height:19px;background:#f3f3f3"></div>
<div style="position:absolute;left:0px;top:188px;width:34px;height:64px;background:#ffffff"></div>
<div style="position:absolute;left:0px;top:252px;width:34px;height:1px;background:#c7c7c7"></div>
<div style="position:absolute;left:35px;top:188px;width:24px;height:64px;background:#ff00ff"></div>
<div style="position:absolute;left:60px;top:188px;width:107px;height:64px;background:#f3f3f3"></div>
<div style="position:absolute;left:168px;top:188px;width:78px;height:64px;background:#f3f3f3"></div>
<div style="position:absolute;left:247px;top:188px;width:81px;height:64px;background:#ffff00"></div>
<div style="position:absolute;left:334px;top:188px;width:1514px;height:64px;background:#f3f3f3"></div>
<div style="position:absolute;left:0px;top:253px;width:34px;height:19px;background:#ffffff"></div>
<div style="position:absolute;left:0px;top:272px;width:34px;height:1px;background:#c7c7c7"></div>
<div style="position:absolute;left:35px;top:253px;width:24px;height:19px;background:#fff"></div>
<div style="position:absolute;left:60px;top:253px;width:107px;height:19px;background:#fff"></div>
<div style="position:absolute;left:168px;top:253px;width:78px;height:19px;background:#f3f3f3"></div>
<div style="position:absolute;left:247px;top:253px;width:81px;height:19px;background:#ffff00"></div>
<div style="position:absolute;left:334px;top:253px;width:1514px;height:19px;background:#f3f3f3"></div>
<div style="position:absolute;left:0px;top:273px;width:34px;height:19px;background:#ffffff"></div>
<div style="position:absolute;left:0px;top:292px;width:34px;height:1px;background:#c7c7c7"></div>
<div style="position:absolute;left:35px;top:273px;width:24px;height:19px;background:#f3f3f3"></div>
<div style="position:absolute;left:60px;top:273px;width:107px;height:19px;background:#f3f3f3"></div>
<div style="position:absolute;left:168px;top:273px;width:78px;height:19px;background:#f3f3f3"></div>
<div style="position:absolute;left:247px;top:273px;width:81px;height:19px;background:#ffff00"></div>
<div style="position:absolute;left:334px;top:273px;width:1514px;height:19px;background:#f3f3f3"></div>
<div style="position:absolute;left:0px;top:293px;width:34px;height:79px;background:#ffffff"></div>
<div style="position:absolute;left:0px;top:372px;width:34px;height:1px;background:#c7c7c7"></div>
<div style="position:absolute;left:35px;top:293px;width:24px;height:79px;background:#ff00ff"></div>
<div style="position:absolute;left:60px;top:293px;width:107px;height:79px;background:#fff"></div>
<div style="position:absolute;left:168px;top:293px;width:78px;height:79px;background:#fff"></div>
<div style="position:absolute;left:247px;top:293px;width:81px;height:79px;background:#00ff00"></div>
<div style="position:absolute;left:334px;top:293px;width:1514px;height:79px;background:#fff"></div>
<div style="position:absolute;left:0px;top:373px;width:34px;height:19px;background:#ffffff"></div>
<div style="position:absolute;left:0px;top:392px;width:34px;height:1px;background:#c7c7c7"></div>
<div style="position:absolute;left:35px;top:373px;width:24px;height:19px;background:#fff"></div>
<div style="position:absolute;left:60px;top:373px;width:107px;height:19px;background:#fff"></div>
<div style="position:absolute;left:168px;top:373px;width:78px;height:19px;background:#fff"></div>
<div style="position:absolute;left:247px;top:373px;width:81px;height:19px;background:#00ff00"></div>
<div style="position:absolute;left:334px;top:373px;width:1514px;height:19px;background:#fff"></div>
<div style="position:absolute;left:0px;top:393px;width:34px;height:19px;background:#ffffff"></div>
<div style="position:absolute;left:0px;top:412px;width:34px;height:1px;background:#c7c7c7"></div>
<div style="position:absolute;left:35px;top:393px;width:24px;height:19px;background:#fff"></div>
<div style="position:absolute;left:60px;top:393px;width:107px;height:19px;background:#fff"></div>
<div style="position:absolute;left:168px;top:393px;width:78px;height:19px;background:#fff"></div>
<div style="position:absolute;left:247px;top:393px;width:81px;height:19px;background:#00ff00"></div>
<div style="position:absolute;left:334px;top:393px;width:1514px;height:19px;background:#fff"></div>
<div style="position:absolute;left:0px;top:413px;width:34px;height:79px;background:#0b57d0"></div>
<div style="position:absolute;left:0px;top:492px;width:34px;height:1px;background:#c7c7c7"></div>
<div style="position:absolute;left:35px;top:413px;width:24px;height:79px;background:#ff00ff"></div>
<div style="position:absolute;left:60px;top:413px;width:107px;height:79px;background:#fff"></div>
<div style="position:absolute;left:168px;top:413px;width:78px;height:79px;background:#fff"></div>
<div style="position:absolute;left:247px;top:413px;width:81px;height:79px;background:#00ff00"></div>
<div style="position:absolute;left:334px;top:413px;width:1514px;height:79px;background:#fff"></div>
<div style="position:absolute;left:0px;top:493px;width:34px;height:19px;background:#ffffff"></div>
<div style="position:absolute;left:0px;top:512px;width:34px;height:1px;background:#c7c7c7"></div>
<div style="position:absolute;left:35px;top:493px;width:24px;height:19px;background:#fff"></div>
<div style="position:absolute;left:60px;top:493px;width:107px;height:19px;background:#f3f3f3"></div>
<div style="position:absolute;left:168px;top:493px;width:78px;height:19px;background:#f3f3f3"></div>
<div style="position:absolute;left:247px;top:493px;width:81px;height:19px;background:#00ff00"></div>
<div style="position:absolute;left:334px;top:493px;width:1514px;height:19px;background:#f3f3f3"></div>
<div style="position:absolute;left:0px;top:513px;width:34px;height:19px;background:#ffffff"></div>
<div style="position:absolute;left:0px;top:532px;width:34px;height:1px;background:#c7c7c7"></div>
<div style="position:absolute;left:35px;top:513px;width:24px;height:19px;background:#fff"></div>
<div style="position:absolute;left:60px;top:513px;width:107px;height:19px;background:#fff"></div>
<div style="position:absolute;left:168px;top:513px;width:78px;height:19px;background:#fff"></div>
<div style="position:absolute;left:247px;top:513px;width:81px;height:19px;background:#00ff00"></div>
<div style="position:absolute;left:334px;top:513px;width:1514px;height:19px;background:#fff"></div>
<div style="position:absolute;left:0px;top:533px;width:34px;height:79px;background:#ffffff"></div>
<div style="position:absolute;left:0px;top:612px;width:34px;height:1px;background:#c7c7c7"></div>
<div style="position:absolute;left:35px;top:533px;width:24px;height:79px;background:#fff"></div>
<div style="position:absolute;left:60px;top:533px;width:107px;height:79px;background:#fff"></div>
<div style="position:absolute;left:168px;top:533px;width:78px;height:79px;background:#fff"></div>
<div style="position:absolute;left:247px;top:533px;width:81px;height:79px;background:#00ff00"></div>
<div style="position:absolute;left:334px;top:533px;width:1514px;height:79px;background:#fff"></div>
<div style="position:absolute;left:0px;top:613px;width:34px;height:19px;background:#ffffff"></div>
<div style="position:absolute;left:0px;top:632px;width:34px;height:1px;background:#c7c7c7"></div>
<div style="position:absolute;left:35px;top:613px;width:24px;height:19px;background:#fff"></div>
<div style="position:absolute;left:60px;top:613px;width:107px;height:19px;background:#fff"></div>
<div style="position:absolute;left:168px;top:613px;width:78px;height:19px;background:#fff"></div>
<div style="position:absolute;left:247px;top:613px;width:81px;height:19px;background:#00ff00"></div>
<div style="position:absolute;left:334px;top:613px;width:1514px;height:19px;background:#fff"></div>
<div style="position:absolute;left:0px;top:633px;width:34px;height:19px;background:#ffffff"></div>
<div style="position:absolute;left:0px;top:652px;width:34px;height:1px;background:#c7c7c7"></div>
<div style="position:absolute;left:35px;top:633px;width:24px;height:19px;background:#fff"></div>
<div style="position:absolute;left:60px;top:633px;width:107px;height:19px;background:#fff"></div>
<div style="position:absolute;left:168px;top:633px;width:78px;height:19px;background:#fff"></div>
<div style="position:absolute;left:247px;top:633px;width:81px;height:19px;background:#00ff00"></div>
<div style="position:absolute;left:334px;top:633px;width:1514px;height:19px;background:#fff"></div>
<div style="position:absolute;left:0px;top:653px;width:34px;height:64px;background:#ffffff"></div>
<div style="position:absolute;left:0px;top:717px;width:34px;height:1px;background:#c7c7c7"></div>
<div style="position:absolute;left:35px;top:653px;width:24px;height:64px;background:#ff00ff"></div>
<div style="position:absolute;left:60px;top:653px;width:107px;height:64px;background:#f3f3f3"></div>
<div style="position:absolute;left:168px;top:653px;width:78px;height:64px;background:#f3f3f3"></div>
<div style="position:absolute;left:247px;top:653px;width:81px;height:64px;background:#00ff00"></div>
<div style="position:absolute;left:334px;top:653px;width:1514px;height:64px;background:#f3f3f3"></div>
<div style="position:absolute;left:34px;top:0px;width:1px;height:683px;background:#c7c7c7"></div>
<div style="position:absolute;left:334px;top:533px;width:78px;height:79px;background:#f3f3f3"></div>
<div style="position:absolute;left:334px;top:42px;width:1515px;height:1px;background:#e1e1e1"></div>
<div style="position:absolute;left:334px;top:62px;width:1515px;height:1px;background:#e1e1e1"></div>
<div style="position:absolute;left:334px;top:82px;width:1515px;height:1px;background:#e1e1e1"></div>
<div style="position:absolute;left:334px;top:147px;width:1515px;height:1px;background:#e1e1e1"></div>
<div style="position:absolute;left:334px;top:167px;width:1515px;height:1px;background:#e1e1e1"></div>
<div style="position:absolute;left:334px;top:187px;width:1515px;height:1px;background:#e1e1e1"></div>
<div style="position:absolute;left:334px;top:252px;width:1515px;height:1px;background:#e1e1e1"></div>
<div style="position:absolute;left:334px;top:272px;width:1515px;height:1px;background:#e1e1e1"></div>
<div style="position:absolute;left:334px;top:292px;width:1515px;height:1px;background:#e1e1e1"></div>
<div style="position:absolute;left:334px;top:372px;width:1515px;height:1px;background:#e1e1e1"></div>
<div style="position:absolute;left:334px;top:392px;width:1515px;height:1px;background:#e1e1e1"></div>
<div style="position:absolute;left:334px;top:412px;width:1515px;height:1px;background:#e1e1e1"></div>
<div style="position:absolute;left:334px;top:492px;width:1515px;height:1px;background:#e1e1e1"></div>
<div style="position:absolute;left:334px;top:512px;width:1515px;height:1px;background:#e1e1e1"></div>
<div style="position:absolute;left:334px;top:532px;width:1515px;height:1px;background:#e1e1e1"></div>
<div style="position:absolute;left:334px;top:612px;width:1515px;height:1px;background:#e1e1e1"></div>
<div style="position:absolute;left:334px;top:632px;width:1515px;height:1px;background:#e1e1e1"></div>
<div style="position:absolute;left:334px;top:652px;width:1515px;height:1px;background:#e1e1e1"></div>
<div style="position:absolute;left:334px;top:717px;width:1515px;height:1px;background:#e1e1e1"></div>
<div style="position:absolute;left:412px;top:0px;width:1px;height:683px;background:#e1e1e1"></div>
<div style="position:absolute;left:507px;top:0px;width:1px;height:683px;background:#e1e1e1"></div>
<div style="position:absolute;left:643px;top:0px;width:1px;height:683px;background:#e1e1e1"></div>
<div style="position:absolute;left:738px;top:0px;width:1px;height:683px;background:#e1e1e1"></div>
<div style="position:absolute;left:926px;top:0px;width:1px;height:683px;background:#e1e1e1"></div>
<div style="position:absolute;left:1031px;top:0px;width:1px;height:683px;background:#e1e1e1"></div>
<div style="position:absolute;left:1141px;top:0px;width:1px;height:683px;background:#e1e1e1"></div>
<div style="position:absolute;left:1244px;top:0px;width:1px;height:683px;background:#e1e1e1"></div>
<div style="position:absolute;left:1349px;top:0px;width:1px;height:683px;background:#e1e1e1"></div>
<div style="position:absolute;left:1455px;top:0px;width:1px;height:683px;background:#e1e1e1"></div>
<div style="position:absolute;left:1557px;top:0px;width:1px;height:683px;background:#e1e1e1"></div>
<div style="position:absolute;left:1696px;top:0px;width:1px;height:683px;background:#e1e1e1"></div>
<div style="position:absolute;left:1791px;top:0px;width:1px;height:683px;background:#e1e1e1"></div>
<div style="position:absolute;left:1848px;top:0px;width:1px;height:683px;background:#e1e1e1"></div>
<div style="position:absolute;left:643px;top:0px;width:95px;height:43px;background:#11734b"></div>
<div style="position:absolute;left:643px;top:82px;width:95px;height:66px;background:#11734b"></div>
<div style="position:absolute;left:643px;top:187px;width:95px;height:66px;background:#11734b"></div>
<div style="position:absolute;left:643px;top:292px;width:95px;height:81px;background:#11734b"></div>
<div style="position:absolute;left:643px;top:412px;width:95px;height:81px;background:#11734b"></div>
<div style="position:absolute;left:643px;top:532px;width:95px;height:81px;background:#11734b"></div>
<div style="position:absolute;left:643px;top:652px;width:95px;height:66px;background:#11734b"></div>
<div style="position:absolute;left:1349px;top:82px;width:106px;height:65px;background:#b4a7d6"></div>
<div style="position:absolute;left:35px;top:42px;width:294px;height:1px;background:#000"></div>
<div style="position:absolute;left:35px;top:62px;width:294px;height:1px;background:#000"></div>
<div style="position:absolute;left:35px;top:82px;width:294px;height:1px;background:#000"></div>
<div style="position:absolute;left:35px;top:147px;width:294px;height:1px;background:#000"></div>
<div style="position:absolute;left:35px;top:167px;width:294px;height:1px;background:#000"></div>
<div style="position:absolute;left:35px;top:187px;width:294px;height:1px;background:#000"></div>
<div style="position:absolute;left:35px;top:252px;width:294px;height:1px;background:#000"></div>
<div style="position:absolute;left:35px;top:272px;width:294px;height:1px;background:#000"></div>
<div style="position:absolute;left:35px;top:292px;width:294px;height:1px;background:#000"></div>
<div style="position:absolute;left:35px;top:372px;width:294px;height:1px;background:#000"></div>
<div style="position:absolute;left:35px;top:392px;width:294px;height:1px;background:#000"></div>
<div style="position:absolute;left:35px;top:412px;width:294px;height:1px;background:#000"></div>
<div style="position:absolute;left:35px;top:492px;width:294px;height:1px;background:#000"></div>
<div style="position:absolute;left:35px;top:512px;width:294px;height:1px;background:#000"></div>
<div style="position:absolute;left:35px;top:532px;width:294px;height:1px;background:#000"></div>
<div style="position:absolute;left:35px;top:612px;width:294px;height:1px;background:#000"></div>
<div style="position:absolute;left:35px;top:632px;width:294px;height:1px;background:#000"></div>
<div style="position:absolute;left:35px;top:652px;width:294px;height:1px;background:#000"></div>
<div style="position:absolute;left:35px;top:717px;width:294px;height:1px;background:#000"></div>
<div style="position:absolute;left:59px;top:0px;width:1px;height:683px;background:#000"></div>
<div style="position:absolute;left:167px;top:0px;width:1px;height:683px;background:#000"></div>
<div style="position:absolute;left:246px;top:0px;width:1px;height:683px;background:#000"></div>
<div style="position:absolute;left:328px;top:0px;width:2px;height:683px;background:#000"></div>
<div style="position:absolute;left:167px;top:188px;width:1px;height:64px;background:#d9d9d9"></div>
<div class="ui" style="left:0;top:0px;width:34px;height:22px;display:flex;align-items:center;justify-content:center;font-size:10px;padding-right:8px;padding-bottom:1px;color:#444">101</div>
<div class="ui" style="left:0;top:43px;width:34px;height:19px;display:flex;align-items:center;justify-content:center;font-size:10px;padding-right:8px;padding-bottom:1px;color:#444">102</div>
<div class="ui" style="left:0;top:63px;width:34px;height:19px;display:flex;align-items:center;justify-content:center;font-size:10px;padding-right:8px;padding-bottom:1px;color:#444">103</div>
<div class="ui" style="left:0;top:83px;width:34px;height:64px;display:flex;align-items:center;justify-content:center;font-size:10px;padding-right:8px;padding-bottom:1px;color:#444">104</div>
<div class="ui" style="left:0;top:148px;width:34px;height:19px;display:flex;align-items:center;justify-content:center;font-size:10px;padding-right:8px;padding-bottom:1px;color:#444">105</div>
<div class="ui" style="left:0;top:168px;width:34px;height:19px;display:flex;align-items:center;justify-content:center;font-size:10px;padding-right:8px;padding-bottom:1px;color:#444">106</div>
<div class="ui" style="left:0;top:188px;width:34px;height:64px;display:flex;align-items:center;justify-content:center;font-size:10px;padding-right:8px;padding-bottom:1px;color:#444">107</div>
<div class="ui" style="left:0;top:253px;width:34px;height:19px;display:flex;align-items:center;justify-content:center;font-size:10px;padding-right:8px;padding-bottom:1px;color:#444">108</div>
<div class="ui" style="left:0;top:273px;width:34px;height:19px;display:flex;align-items:center;justify-content:center;font-size:10px;padding-right:8px;padding-bottom:1px;color:#444">109</div>
<div class="ui" style="left:0;top:293px;width:34px;height:79px;display:flex;align-items:center;justify-content:center;font-size:10px;padding-right:8px;padding-bottom:1px;color:#444">110</div>
<div class="ui" style="left:0;top:373px;width:34px;height:19px;display:flex;align-items:center;justify-content:center;font-size:10px;padding-right:8px;padding-bottom:1px;color:#444">111</div>
<div class="ui" style="left:0;top:393px;width:34px;height:19px;display:flex;align-items:center;justify-content:center;font-size:10px;padding-right:8px;padding-bottom:1px;color:#444">112</div>
<div class="ui" style="left:0;top:413px;width:34px;height:79px;display:flex;align-items:center;justify-content:center;font-size:10px;padding-right:8px;padding-bottom:1px;color:#fff;font-weight:bold">113</div>
<div class="ui" style="left:0;top:493px;width:34px;height:19px;display:flex;align-items:center;justify-content:center;font-size:10px;padding-right:8px;padding-bottom:1px;color:#444">114</div>
<div class="ui" style="left:0;top:513px;width:34px;height:19px;display:flex;align-items:center;justify-content:center;font-size:10px;padding-right:8px;padding-bottom:1px;color:#444">115</div>
<div class="ui" style="left:0;top:533px;width:34px;height:79px;display:flex;align-items:center;justify-content:center;font-size:10px;padding-right:8px;padding-bottom:1px;color:#444">116</div>
<div class="ui" style="left:0;top:613px;width:34px;height:19px;display:flex;align-items:center;justify-content:center;font-size:10px;padding-right:8px;padding-bottom:1px;color:#444">117</div>
<div class="ui" style="left:0;top:633px;width:34px;height:19px;display:flex;align-items:center;justify-content:center;font-size:10px;padding-right:8px;padding-bottom:1px;color:#444">118</div>
<div class="t" style="left:35px;top:-4px;width:24px;height:46px;justify-content:flex-end;text-align:right;padding:0 3px 0px 3px;">32</div>
<div class="t" style="left:60px;top:-4px;width:107px;height:46px;justify-content:flex-end;text-align:left;padding:0 3px 0px 3px;color:#1155cc;text-decoration:underline">TrebaCredit</div>
<div class="t" style="left:247px;top:-4px;width:81px;height:46px;justify-content:flex-end;text-align:left;padding:0 3px 0px 4px;">Свєта</div>
<div class="t" style="left:60px;top:42px;width:107px;height:20px;justify-content:flex-end;text-align:left;padding:0 3px 0px 3px;">дзвінок 2</div>
<div class="t" style="left:60px;top:62px;width:107px;height:20px;justify-content:flex-end;text-align:left;padding:0 3px 0px 3px;">дзвінок 3</div>
<div class="t" style="left:35px;top:83px;width:24px;height:64px;justify-content:flex-end;text-align:right;padding:0 3px 0px 3px;">33</div>
<div class="t" style="left:60px;top:83px;width:107px;height:64px;justify-content:flex-end;text-align:left;padding:0 3px 0px 3px;color:#1155cc;text-decoration:underline">Loan+</div>
<div class="t" style="left:247px;top:83px;width:81px;height:64px;justify-content:flex-end;text-align:left;padding:0 3px 0px 4px;">Свєта</div>
<div class="t" style="left:60px;top:147px;width:107px;height:20px;justify-content:flex-end;text-align:left;padding:0 3px 0px 3px;">дзвінок 2</div>
<div class="t" style="left:60px;top:167px;width:107px;height:20px;justify-content:flex-end;text-align:left;padding:0 3px 0px 3px;">дзвінок 3</div>
<div class="t" style="left:35px;top:188px;width:24px;height:64px;justify-content:flex-end;text-align:right;padding:0 3px 0px 3px;">34</div>
<div class="t" style="left:60px;top:188px;width:107px;height:64px;justify-content:flex-end;text-align:left;padding:0 3px 0px 3px;color:#1155cc;text-decoration:underline">Smartiway</div>
<div class="t" style="left:247px;top:188px;width:81px;height:64px;justify-content:flex-end;text-align:left;padding:0 3px 0px 4px;">Свєта</div>
<div class="t" style="left:60px;top:252px;width:107px;height:20px;justify-content:flex-end;text-align:left;padding:0 3px 0px 3px;">дзвінок 2</div>
<div class="t" style="left:60px;top:272px;width:107px;height:20px;justify-content:flex-end;text-align:left;padding:0 3px 0px 3px;">дзвінок 3</div>
<div class="t" style="left:35px;top:293px;width:24px;height:79px;justify-content:flex-end;text-align:right;padding:0 3px 0px 3px;">35</div>
<div class="t" style="left:60px;top:293px;width:107px;height:79px;justify-content:flex-end;text-align:left;padding:0 3px 0px 3px;color:#1155cc;text-decoration:underline">Tengo</div>
<div class="t" style="left:247px;top:293px;width:81px;height:79px;justify-content:flex-end;text-align:left;padding:0 3px 0px 4px;">Влада</div>
<div class="t" style="left:60px;top:372px;width:107px;height:20px;justify-content:flex-end;text-align:left;padding:0 3px 0px 3px;">дзвінок 2</div>
<div class="t" style="left:60px;top:392px;width:107px;height:20px;justify-content:flex-end;text-align:left;padding:0 3px 0px 3px;">дзвінок 3</div>
<div class="t" style="left:35px;top:413px;width:24px;height:79px;justify-content:flex-end;text-align:right;padding:0 3px 0px 3px;">36</div>
<div class="t" style="left:60px;top:413px;width:107px;height:79px;justify-content:flex-end;text-align:left;padding:0 3px 0px 3px;color:#1155cc;text-decoration:underline">Miloan</div>
<div class="t" style="left:247px;top:413px;width:81px;height:79px;justify-content:flex-end;text-align:left;padding:0 3px 0px 4px;">Влада</div>
<div class="t" style="left:60px;top:492px;width:107px;height:20px;justify-content:flex-end;text-align:left;padding:0 3px 0px 3px;">дзвінок 2</div>
<div class="t" style="left:60px;top:512px;width:107px;height:20px;justify-content:flex-end;text-align:left;padding:0 3px 0px 3px;">дзвінок 3</div>
<div class="t" style="left:35px;top:533px;width:24px;height:79px;justify-content:flex-end;text-align:right;padding:0 3px 0px 3px;">37</div>
<div class="t" style="left:60px;top:533px;width:107px;height:79px;justify-content:flex-end;text-align:left;padding:0 3px 0px 3px;color:#1155cc;text-decoration:underline">Amigo</div>
<div class="t" style="left:247px;top:533px;width:81px;height:79px;justify-content:flex-end;text-align:left;padding:0 3px 0px 4px;">Влада</div>
<div class="t" style="left:60px;top:612px;width:107px;height:20px;justify-content:flex-end;text-align:left;padding:0 3px 0px 3px;">дзвінок 2</div>
<div class="t" style="left:60px;top:632px;width:107px;height:20px;justify-content:flex-end;text-align:left;padding:0 3px 0px 3px;">дзвінок 3</div>
<div class="cm" style="left:161px;top:188px"></div>
<div class="t" style="left:334px;top:-38px;width:78px;height:80px;justify-content:flex-end;text-align:right;padding:0 21px 0px 3px;">100%</div>
<div class="t" style="left:507px;top:-38px;width:136px;height:80px;justify-content:flex-end;text-align:left;padding:0 22px 0px 4px;">так + скрін з сайту</div>
<div class="t" style="left:643px;top:-38px;width:95px;height:80px;justify-content:flex-end;text-align:left;padding:0 5px 0px 4px;color:#d9efc4">так, в КЦ<br>підтвердил<br>и</div>
<div class="t" style="left:738px;top:-38px;width:188px;height:80px;justify-content:flex-end;text-align:left;padding:0 20px 0px 4px;">є</div>
<div class="t" style="left:926px;top:-38px;width:105px;height:80px;justify-content:flex-end;text-align:center;padding:0 18px 0px 0px;">є відповіді на<br>різні питання<br>(відповіли до<br>1 год.)</div>
<div class="t" style="left:1031px;top:-38px;width:110px;height:80px;justify-content:flex-end;text-align:center;padding:0 18px 0px 0px;">є, відповіли<br>протягом<br>години</div>
<div class="t" style="left:1141px;top:-38px;width:103px;height:80px;justify-content:flex-end;text-align:left;padding:0 20px 0px 4px;">немає</div>
<div class="t" style="left:1244px;top:-38px;width:105px;height:80px;justify-content:flex-end;text-align:left;padding:0 20px 0px 4px;">є</div>
<div class="t" style="left:1349px;top:-38px;width:106px;height:80px;justify-content:flex-end;text-align:left;padding:0 20px 0px 4px;">є, але<br>відрізняється</div>
<div class="t" style="left:1455px;top:-38px;width:102px;height:80px;justify-content:flex-end;text-align:left;padding:0 20px 0px 4px;">є</div>
<div class="t" style="left:1696px;top:-38px;width:95px;height:80px;justify-content:flex-end;text-align:left;padding:0 20px 0px 4px;">є</div>
<div class="t" style="left:1791px;top:-38px;width:57px;height:80px;justify-content:flex-end;text-align:left;padding:0 20px 0px 4px;">немає</div>
<div class="dd" style="left:399px;top:31px;border-top-color:#7a7a7a"></div>
<div class="dd" style="left:630px;top:31px;border-top-color:#7a7a7a"></div>
<div class="dd" style="left:725px;top:31px;border-top-color:#eaeaea"></div>
<div class="dd" style="left:913px;top:31px;border-top-color:#7a7a7a"></div>
<div class="dd" style="left:1018px;top:31px;border-top-color:#7a7a7a"></div>
<div class="dd" style="left:1128px;top:31px;border-top-color:#7a7a7a"></div>
<div class="dd" style="left:1231px;top:31px;border-top-color:#7a7a7a"></div>
<div class="dd" style="left:1336px;top:31px;border-top-color:#7a7a7a"></div>
<div class="dd" style="left:1442px;top:31px;border-top-color:#7a7a7a"></div>
<div class="dd" style="left:1544px;top:31px;border-top-color:#7a7a7a"></div>
<div class="dd" style="left:1778px;top:31px;border-top-color:#7a7a7a"></div>
<div class="t" style="left:334px;top:42px;width:78px;height:20px;justify-content:flex-end;text-align:right;padding:0 21px 0px 3px;">100%</div>
<div class="dd" style="left:399px;top:51px;border-top-color:#7a7a7a"></div>
<div class="dd" style="left:630px;top:51px;border-top-color:#7a7a7a"></div>
<div class="dd" style="left:725px;top:51px;border-top-color:#7a7a7a"></div>
<div class="dd" style="left:913px;top:51px;border-top-color:#7a7a7a"></div>
<div class="dd" style="left:1018px;top:51px;border-top-color:#7a7a7a"></div>
<div class="dd" style="left:1128px;top:51px;border-top-color:#7a7a7a"></div>
<div class="dd" style="left:1231px;top:51px;border-top-color:#7a7a7a"></div>
<div class="dd" style="left:1336px;top:51px;border-top-color:#7a7a7a"></div>
<div class="dd" style="left:1442px;top:51px;border-top-color:#7a7a7a"></div>
<div class="dd" style="left:1544px;top:51px;border-top-color:#7a7a7a"></div>
<div class="dd" style="left:1778px;top:51px;border-top-color:#7a7a7a"></div>
<div class="dd" style="left:399px;top:71px;border-top-color:#7a7a7a"></div>
<div class="dd" style="left:630px;top:71px;border-top-color:#7a7a7a"></div>
<div class="dd" style="left:725px;top:71px;border-top-color:#7a7a7a"></div>
<div class="dd" style="left:913px;top:71px;border-top-color:#7a7a7a"></div>
<div class="dd" style="left:1018px;top:71px;border-top-color:#7a7a7a"></div>
<div class="dd" style="left:1128px;top:71px;border-top-color:#7a7a7a"></div>
<div class="dd" style="left:1231px;top:71px;border-top-color:#7a7a7a"></div>
<div class="dd" style="left:1336px;top:71px;border-top-color:#7a7a7a"></div>
<div class="dd" style="left:1442px;top:71px;border-top-color:#7a7a7a"></div>
<div class="dd" style="left:1544px;top:71px;border-top-color:#7a7a7a"></div>
<div class="dd" style="left:1778px;top:71px;border-top-color:#7a7a7a"></div>
<div class="cm" style="left:637px;top:-37px"></div>
<div class="cm" style="left:732px;top:-37px"></div>
<div class="cm" style="left:1025px;top:-37px"></div>
<div class="cm" style="left:1135px;top:-37px"></div>
<div class="cm" style="left:1238px;top:-37px"></div>
<div class="cm" style="left:1343px;top:-37px"></div>
<div class="cm" style="left:1449px;top:-37px"></div>
<div class="cm" style="left:1551px;top:-37px"></div>
<div class="cm" style="left:1785px;top:-37px"></div>
<div class="cm" style="left:920px;top:-37px"></div>
<div class="t" style="left:334px;top:82px;width:78px;height:65px;justify-content:flex-end;text-align:right;padding:0 21px 0px 3px;">100%</div>
<div class="t" style="left:507px;top:82px;width:136px;height:65px;justify-content:flex-end;text-align:left;padding:0 22px 0px 4px;">так + скрін з сайту</div>
<div class="t" style="left:643px;top:82px;width:95px;height:65px;justify-content:flex-end;text-align:left;padding:0 5px 0px 4px;color:#d9efc4">так, в КЦ<br>підтвердил<br>и</div>
<div class="t" style="left:738px;top:82px;width:188px;height:65px;justify-content:flex-end;text-align:left;padding:0 20px 0px 4px;"></div>
<div class="t" style="left:926px;top:82px;width:105px;height:65px;justify-content:flex-end;text-align:center;padding:0 18px 0px 0px;">не<br>відповідають<br>без надання<br>даних</div>
<div class="t" style="left:1031px;top:82px;width:110px;height:65px;justify-content:flex-end;text-align:center;padding:0 18px 0px 0px;">є, відповіли<br>протягом<br>години</div>
<div class="t" style="left:1141px;top:82px;width:103px;height:65px;justify-content:flex-end;text-align:left;padding:0 20px 0px 4px;">є</div>
<div class="t" style="left:1244px;top:82px;width:105px;height:65px;justify-content:flex-end;text-align:left;padding:0 20px 0px 4px;">немає</div>
<div class="t" style="left:1349px;top:82px;width:106px;height:65px;justify-content:flex-end;text-align:left;padding:0 20px 0px 4px;">немає</div>
<div class="t" style="left:1455px;top:82px;width:102px;height:65px;justify-content:flex-end;text-align:left;padding:0 20px 0px 4px;">є</div>
<div class="t" style="left:1696px;top:82px;width:95px;height:65px;justify-content:flex-end;text-align:left;padding:0 20px 0px 4px;">є</div>
<div class="t" style="left:1791px;top:82px;width:57px;height:65px;justify-content:flex-end;text-align:left;padding:0 20px 0px 4px;">немає</div>
<div class="dd" style="left:399px;top:136px;border-top-color:#7a7a7a"></div>
<div class="dd" style="left:630px;top:136px;border-top-color:#7a7a7a"></div>
<div class="dd" style="left:725px;top:136px;border-top-color:#eaeaea"></div>
<div class="dd" style="left:913px;top:136px;border-top-color:#7a7a7a"></div>
<div class="dd" style="left:1018px;top:136px;border-top-color:#7a7a7a"></div>
<div class="dd" style="left:1128px;top:136px;border-top-color:#7a7a7a"></div>
<div class="dd" style="left:1231px;top:136px;border-top-color:#7a7a7a"></div>
<div class="dd" style="left:1336px;top:136px;border-top-color:#7a7a7a"></div>
<div class="dd" style="left:1442px;top:136px;border-top-color:#6a4fa8"></div>
<div class="dd" style="left:1544px;top:136px;border-top-color:#7a7a7a"></div>
<div class="dd" style="left:1778px;top:136px;border-top-color:#7a7a7a"></div>
<div class="t" style="left:334px;top:147px;width:78px;height:20px;justify-content:flex-end;text-align:right;padding:0 21px 0px 3px;">100%</div>
<div class="dd" style="left:399px;top:156px;border-top-color:#7a7a7a"></div>
<div class="dd" style="left:630px;top:156px;border-top-color:#7a7a7a"></div>
<div class="dd" style="left:725px;top:156px;border-top-color:#7a7a7a"></div>
<div class="dd" style="left:913px;top:156px;border-top-color:#7a7a7a"></div>
<div class="dd" style="left:1018px;top:156px;border-top-color:#7a7a7a"></div>
<div class="dd" style="left:1128px;top:156px;border-top-color:#7a7a7a"></div>
<div class="dd" style="left:1231px;top:156px;border-top-color:#7a7a7a"></div>
<div class="dd" style="left:1336px;top:156px;border-top-color:#7a7a7a"></div>
<div class="dd" style="left:1442px;top:156px;border-top-color:#7a7a7a"></div>
<div class="dd" style="left:1544px;top:156px;border-top-color:#7a7a7a"></div>
<div class="dd" style="left:1778px;top:156px;border-top-color:#7a7a7a"></div>
<div class="dd" style="left:399px;top:176px;border-top-color:#7a7a7a"></div>
<div class="dd" style="left:630px;top:176px;border-top-color:#7a7a7a"></div>
<div class="dd" style="left:725px;top:176px;border-top-color:#7a7a7a"></div>
<div class="dd" style="left:913px;top:176px;border-top-color:#7a7a7a"></div>
<div class="dd" style="left:1018px;top:176px;border-top-color:#7a7a7a"></div>
<div class="dd" style="left:1128px;top:176px;border-top-color:#7a7a7a"></div>
<div class="dd" style="left:1231px;top:176px;border-top-color:#7a7a7a"></div>
<div class="dd" style="left:1336px;top:176px;border-top-color:#7a7a7a"></div>
<div class="dd" style="left:1442px;top:176px;border-top-color:#7a7a7a"></div>
<div class="dd" style="left:1544px;top:176px;border-top-color:#7a7a7a"></div>
<div class="dd" style="left:1778px;top:176px;border-top-color:#7a7a7a"></div>
<div class="cm" style="left:637px;top:83px"></div>
<div class="cm" style="left:732px;top:83px"></div>
<div class="cm" style="left:1025px;top:83px"></div>
<div class="cm" style="left:1135px;top:83px"></div>
<div class="cm" style="left:1238px;top:83px"></div>
<div class="cm" style="left:1343px;top:83px"></div>
<div class="cm" style="left:1449px;top:83px"></div>
<div class="cm" style="left:1551px;top:83px"></div>
<div class="cm" style="left:1785px;top:83px"></div>
<div class="t" style="left:334px;top:187px;width:78px;height:65px;justify-content:flex-end;text-align:right;padding:0 21px 0px 3px;">100%</div>
<div class="t" style="left:507px;top:187px;width:136px;height:65px;justify-content:flex-end;text-align:left;padding:0 22px 0px 4px;">так + скрін з сайту</div>
<div class="t" style="left:643px;top:187px;width:95px;height:65px;justify-content:flex-end;text-align:left;padding:0 5px 0px 4px;color:#d9efc4">так, в КЦ<br>підтвердил<br>и</div>
<div class="t" style="left:738px;top:187px;width:188px;height:65px;justify-content:flex-end;text-align:left;padding:0 20px 0px 4px;">немає</div>
<div class="t" style="left:926px;top:187px;width:105px;height:65px;justify-content:flex-end;text-align:center;padding:0 18px 0px 0px;">є відповіді на<br>різні питання<br>(відповіли до<br>1 год.)</div>
<div class="t" style="left:1031px;top:187px;width:110px;height:65px;justify-content:flex-end;text-align:center;padding:0 18px 0px 0px;">є, відповіли<br>протягом<br>години</div>
<div class="t" style="left:1141px;top:187px;width:103px;height:65px;justify-content:flex-end;text-align:left;padding:0 20px 0px 4px;">немає</div>
<div class="t" style="left:1244px;top:187px;width:105px;height:65px;justify-content:flex-end;text-align:left;padding:0 20px 0px 4px;">є</div>
<div class="t" style="left:1349px;top:187px;width:106px;height:65px;justify-content:flex-end;text-align:left;padding:0 20px 0px 4px;">є</div>
<div class="t" style="left:1455px;top:187px;width:102px;height:65px;justify-content:flex-end;text-align:left;padding:0 20px 0px 4px;">є</div>
<div class="t" style="left:1696px;top:187px;width:95px;height:65px;justify-content:flex-end;text-align:left;padding:0 20px 0px 4px;">є</div>
<div class="t" style="left:1791px;top:187px;width:57px;height:65px;justify-content:flex-end;text-align:left;padding:0 20px 0px 4px;">є</div>
<div class="dd" style="left:399px;top:241px;border-top-color:#7a7a7a"></div>
<div class="dd" style="left:630px;top:241px;border-top-color:#7a7a7a"></div>
<div class="dd" style="left:725px;top:241px;border-top-color:#eaeaea"></div>
<div class="dd" style="left:913px;top:241px;border-top-color:#7a7a7a"></div>
<div class="dd" style="left:1018px;top:241px;border-top-color:#7a7a7a"></div>
<div class="dd" style="left:1128px;top:241px;border-top-color:#7a7a7a"></div>
<div class="dd" style="left:1231px;top:241px;border-top-color:#7a7a7a"></div>
<div class="dd" style="left:1336px;top:241px;border-top-color:#7a7a7a"></div>
<div class="dd" style="left:1442px;top:241px;border-top-color:#7a7a7a"></div>
<div class="dd" style="left:1544px;top:241px;border-top-color:#7a7a7a"></div>
<div class="dd" style="left:1778px;top:241px;border-top-color:#7a7a7a"></div>
<div class="t" style="left:334px;top:252px;width:78px;height:20px;justify-content:flex-end;text-align:right;padding:0 21px 0px 3px;">100%</div>
<div class="dd" style="left:399px;top:261px;border-top-color:#7a7a7a"></div>
<div class="dd" style="left:630px;top:261px;border-top-color:#7a7a7a"></div>
<div class="dd" style="left:725px;top:261px;border-top-color:#7a7a7a"></div>
<div class="dd" style="left:913px;top:261px;border-top-color:#7a7a7a"></div>
<div class="dd" style="left:1018px;top:261px;border-top-color:#7a7a7a"></div>
<div class="dd" style="left:1128px;top:261px;border-top-color:#7a7a7a"></div>
<div class="dd" style="left:1231px;top:261px;border-top-color:#7a7a7a"></div>
<div class="dd" style="left:1336px;top:261px;border-top-color:#7a7a7a"></div>
<div class="dd" style="left:1442px;top:261px;border-top-color:#7a7a7a"></div>
<div class="dd" style="left:1544px;top:261px;border-top-color:#7a7a7a"></div>
<div class="dd" style="left:1778px;top:261px;border-top-color:#7a7a7a"></div>
<div class="dd" style="left:399px;top:281px;border-top-color:#7a7a7a"></div>
<div class="dd" style="left:630px;top:281px;border-top-color:#7a7a7a"></div>
<div class="dd" style="left:725px;top:281px;border-top-color:#7a7a7a"></div>
<div class="dd" style="left:913px;top:281px;border-top-color:#7a7a7a"></div>
<div class="dd" style="left:1018px;top:281px;border-top-color:#7a7a7a"></div>
<div class="dd" style="left:1128px;top:281px;border-top-color:#7a7a7a"></div>
<div class="dd" style="left:1231px;top:281px;border-top-color:#7a7a7a"></div>
<div class="dd" style="left:1336px;top:281px;border-top-color:#7a7a7a"></div>
<div class="dd" style="left:1442px;top:281px;border-top-color:#7a7a7a"></div>
<div class="dd" style="left:1544px;top:281px;border-top-color:#7a7a7a"></div>
<div class="dd" style="left:1778px;top:281px;border-top-color:#7a7a7a"></div>
<div class="cm" style="left:637px;top:188px"></div>
<div class="cm" style="left:732px;top:188px"></div>
<div class="cm" style="left:1025px;top:188px"></div>
<div class="cm" style="left:1135px;top:188px"></div>
<div class="cm" style="left:1238px;top:188px"></div>
<div class="cm" style="left:1343px;top:188px"></div>
<div class="cm" style="left:1449px;top:188px"></div>
<div class="cm" style="left:1551px;top:188px"></div>
<div class="cm" style="left:1785px;top:188px"></div>
<div class="cm" style="left:920px;top:188px"></div>
<div class="t" style="left:334px;top:292px;width:78px;height:80px;justify-content:flex-end;text-align:right;padding:0 21px 0px 3px;">100%</div>
<div class="t" style="left:507px;top:292px;width:136px;height:80px;justify-content:flex-end;text-align:left;padding:0 22px 0px 4px;">так + скрін з сайту</div>
<div class="t" style="left:643px;top:292px;width:95px;height:80px;justify-content:flex-end;text-align:left;padding:0 5px 0px 4px;color:#d9efc4">так, в КЦ<br>підтвердил<br>и</div>
<div class="t" style="left:738px;top:292px;width:188px;height:80px;justify-content:flex-end;text-align:left;padding:0 20px 0px 4px;">є</div>
<div class="t" style="left:926px;top:292px;width:105px;height:80px;justify-content:flex-end;text-align:center;padding:0 18px 0px 0px;">немає<br>онлайн-чата<br>або не<br>відповіли<br>зовсім</div>
<div class="t" style="left:1031px;top:292px;width:110px;height:80px;justify-content:flex-end;text-align:center;padding:0 18px 0px 0px;">є, відповіли<br>протягом<br>години</div>
<div class="t" style="left:1141px;top:292px;width:103px;height:80px;justify-content:flex-end;text-align:left;padding:0 20px 0px 4px;">є</div>
<div class="t" style="left:1244px;top:292px;width:105px;height:80px;justify-content:flex-end;text-align:left;padding:0 20px 0px 4px;">є</div>
<div class="t" style="left:1349px;top:292px;width:106px;height:80px;justify-content:flex-end;text-align:left;padding:0 20px 0px 4px;">є, але<br>відрізняється</div>
<div class="t" style="left:1455px;top:292px;width:102px;height:80px;justify-content:flex-end;text-align:left;padding:0 20px 0px 4px;">немає</div>
<div class="t" style="left:1696px;top:292px;width:95px;height:80px;justify-content:flex-end;text-align:left;padding:0 20px 0px 4px;">є</div>
<div class="t" style="left:1791px;top:292px;width:57px;height:80px;justify-content:flex-end;text-align:left;padding:0 20px 0px 4px;">немає</div>
<div class="dd" style="left:399px;top:361px;border-top-color:#7a7a7a"></div>
<div class="dd" style="left:630px;top:361px;border-top-color:#7a7a7a"></div>
<div class="dd" style="left:725px;top:361px;border-top-color:#eaeaea"></div>
<div class="dd" style="left:913px;top:361px;border-top-color:#7a7a7a"></div>
<div class="dd" style="left:1018px;top:361px;border-top-color:#7a7a7a"></div>
<div class="dd" style="left:1128px;top:361px;border-top-color:#7a7a7a"></div>
<div class="dd" style="left:1231px;top:361px;border-top-color:#7a7a7a"></div>
<div class="dd" style="left:1336px;top:361px;border-top-color:#7a7a7a"></div>
<div class="dd" style="left:1442px;top:361px;border-top-color:#7a7a7a"></div>
<div class="dd" style="left:1544px;top:361px;border-top-color:#7a7a7a"></div>
<div class="dd" style="left:1778px;top:361px;border-top-color:#7a7a7a"></div>
<div class="t" style="left:334px;top:372px;width:78px;height:20px;justify-content:flex-end;text-align:right;padding:0 21px 0px 3px;">100%</div>
<div class="dd" style="left:399px;top:381px;border-top-color:#7a7a7a"></div>
<div class="dd" style="left:630px;top:381px;border-top-color:#7a7a7a"></div>
<div class="dd" style="left:725px;top:381px;border-top-color:#7a7a7a"></div>
<div class="dd" style="left:913px;top:381px;border-top-color:#7a7a7a"></div>
<div class="dd" style="left:1018px;top:381px;border-top-color:#7a7a7a"></div>
<div class="dd" style="left:1128px;top:381px;border-top-color:#7a7a7a"></div>
<div class="dd" style="left:1231px;top:381px;border-top-color:#7a7a7a"></div>
<div class="dd" style="left:1336px;top:381px;border-top-color:#7a7a7a"></div>
<div class="dd" style="left:1442px;top:381px;border-top-color:#7a7a7a"></div>
<div class="dd" style="left:1544px;top:381px;border-top-color:#7a7a7a"></div>
<div class="dd" style="left:1778px;top:381px;border-top-color:#7a7a7a"></div>
<div class="dd" style="left:399px;top:401px;border-top-color:#7a7a7a"></div>
<div class="dd" style="left:630px;top:401px;border-top-color:#7a7a7a"></div>
<div class="dd" style="left:725px;top:401px;border-top-color:#7a7a7a"></div>
<div class="dd" style="left:913px;top:401px;border-top-color:#7a7a7a"></div>
<div class="dd" style="left:1018px;top:401px;border-top-color:#7a7a7a"></div>
<div class="dd" style="left:1128px;top:401px;border-top-color:#7a7a7a"></div>
<div class="dd" style="left:1231px;top:401px;border-top-color:#7a7a7a"></div>
<div class="dd" style="left:1336px;top:401px;border-top-color:#7a7a7a"></div>
<div class="dd" style="left:1442px;top:401px;border-top-color:#7a7a7a"></div>
<div class="dd" style="left:1544px;top:401px;border-top-color:#7a7a7a"></div>
<div class="dd" style="left:1778px;top:401px;border-top-color:#7a7a7a"></div>
<div class="cm" style="left:637px;top:293px"></div>
<div class="cm" style="left:732px;top:293px"></div>
<div class="cm" style="left:1025px;top:293px"></div>
<div class="cm" style="left:1135px;top:293px"></div>
<div class="cm" style="left:1238px;top:293px"></div>
<div class="cm" style="left:1343px;top:293px"></div>
<div class="cm" style="left:1449px;top:293px"></div>
<div class="cm" style="left:1551px;top:293px"></div>
<div class="cm" style="left:1785px;top:293px"></div>
<div class="cm" style="left:920px;top:293px"></div>
<div class="t" style="left:334px;top:412px;width:78px;height:80px;justify-content:flex-end;text-align:right;padding:0 21px 0px 3px;">100%</div>
<div class="t" style="left:507px;top:412px;width:136px;height:80px;justify-content:flex-end;text-align:left;padding:0 22px 0px 4px;">так + скрін з сайту</div>
<div class="t" style="left:643px;top:412px;width:95px;height:80px;justify-content:flex-end;text-align:left;padding:0 5px 0px 4px;color:#d9efc4">так, в КЦ<br>підтвердил<br>и</div>
<div class="t" style="left:738px;top:412px;width:188px;height:80px;justify-content:flex-end;text-align:left;padding:0 20px 0px 4px;">є</div>
<div class="t" style="left:926px;top:412px;width:105px;height:80px;justify-content:flex-end;text-align:center;padding:0 18px 0px 0px;">немає<br>онлайн-чата<br>або не<br>відповіли<br>зовсім</div>
<div class="t" style="left:1031px;top:412px;width:110px;height:80px;justify-content:flex-end;text-align:center;padding:0 18px 0px 0px;">є, відповіли<br>протягом<br>години</div>
<div class="t" style="left:1141px;top:412px;width:103px;height:80px;justify-content:flex-end;text-align:left;padding:0 20px 0px 4px;">є</div>
<div class="t" style="left:1244px;top:412px;width:105px;height:80px;justify-content:flex-end;text-align:left;padding:0 20px 0px 4px;">є</div>
<div class="t" style="left:1349px;top:412px;width:106px;height:80px;justify-content:flex-end;text-align:left;padding:0 20px 0px 4px;">є, але<br>відрізняється</div>
<div class="t" style="left:1455px;top:412px;width:102px;height:80px;justify-content:flex-end;text-align:left;padding:0 20px 0px 4px;">немає</div>
<div class="t" style="left:1696px;top:412px;width:95px;height:80px;justify-content:flex-end;text-align:left;padding:0 20px 0px 4px;">є</div>
<div class="t" style="left:1791px;top:412px;width:57px;height:80px;justify-content:flex-end;text-align:left;padding:0 20px 0px 4px;">немає</div>
<div class="dd" style="left:399px;top:481px;border-top-color:#7a7a7a"></div>
<div class="dd" style="left:630px;top:481px;border-top-color:#7a7a7a"></div>
<div class="dd" style="left:725px;top:481px;border-top-color:#eaeaea"></div>
<div class="dd" style="left:913px;top:481px;border-top-color:#7a7a7a"></div>
<div class="dd" style="left:1018px;top:481px;border-top-color:#7a7a7a"></div>
<div class="dd" style="left:1128px;top:481px;border-top-color:#7a7a7a"></div>
<div class="dd" style="left:1231px;top:481px;border-top-color:#7a7a7a"></div>
<div class="dd" style="left:1336px;top:481px;border-top-color:#7a7a7a"></div>
<div class="dd" style="left:1442px;top:481px;border-top-color:#7a7a7a"></div>
<div class="dd" style="left:1544px;top:481px;border-top-color:#7a7a7a"></div>
<div class="dd" style="left:1778px;top:481px;border-top-color:#7a7a7a"></div>
<div class="t" style="left:334px;top:492px;width:78px;height:20px;justify-content:flex-end;text-align:right;padding:0 21px 0px 3px;">100%</div>
<div class="dd" style="left:399px;top:501px;border-top-color:#7a7a7a"></div>
<div class="dd" style="left:630px;top:501px;border-top-color:#7a7a7a"></div>
<div class="dd" style="left:725px;top:501px;border-top-color:#7a7a7a"></div>
<div class="dd" style="left:913px;top:501px;border-top-color:#7a7a7a"></div>
<div class="dd" style="left:1018px;top:501px;border-top-color:#7a7a7a"></div>
<div class="dd" style="left:1128px;top:501px;border-top-color:#7a7a7a"></div>
<div class="dd" style="left:1231px;top:501px;border-top-color:#7a7a7a"></div>
<div class="dd" style="left:1336px;top:501px;border-top-color:#7a7a7a"></div>
<div class="dd" style="left:1442px;top:501px;border-top-color:#7a7a7a"></div>
<div class="dd" style="left:1544px;top:501px;border-top-color:#7a7a7a"></div>
<div class="dd" style="left:1778px;top:501px;border-top-color:#7a7a7a"></div>
<div class="dd" style="left:399px;top:521px;border-top-color:#7a7a7a"></div>
<div class="dd" style="left:630px;top:521px;border-top-color:#7a7a7a"></div>
<div class="dd" style="left:725px;top:521px;border-top-color:#7a7a7a"></div>
<div class="dd" style="left:913px;top:521px;border-top-color:#7a7a7a"></div>
<div class="dd" style="left:1018px;top:521px;border-top-color:#7a7a7a"></div>
<div class="dd" style="left:1128px;top:521px;border-top-color:#7a7a7a"></div>
<div class="dd" style="left:1231px;top:521px;border-top-color:#7a7a7a"></div>
<div class="dd" style="left:1336px;top:521px;border-top-color:#7a7a7a"></div>
<div class="dd" style="left:1442px;top:521px;border-top-color:#7a7a7a"></div>
<div class="dd" style="left:1544px;top:521px;border-top-color:#7a7a7a"></div>
<div class="dd" style="left:1778px;top:521px;border-top-color:#7a7a7a"></div>
<div class="cm" style="left:637px;top:413px"></div>
<div class="cm" style="left:732px;top:413px"></div>
<div class="cm" style="left:1025px;top:413px"></div>
<div class="cm" style="left:1135px;top:413px"></div>
<div class="cm" style="left:1238px;top:413px"></div>
<div class="cm" style="left:1343px;top:413px"></div>
<div class="cm" style="left:1449px;top:413px"></div>
<div class="cm" style="left:1551px;top:413px"></div>
<div class="cm" style="left:1785px;top:413px"></div>
<div class="cm" style="left:920px;top:413px"></div>
<div class="t" style="left:334px;top:532px;width:78px;height:80px;justify-content:flex-end;text-align:right;padding:0 21px 0px 3px;">100%</div>
<div class="t" style="left:507px;top:532px;width:136px;height:80px;justify-content:flex-end;text-align:left;padding:0 22px 0px 4px;">так + скрін з сайту</div>
<div class="t" style="left:643px;top:532px;width:95px;height:80px;justify-content:flex-end;text-align:left;padding:0 5px 0px 4px;color:#d9efc4">так, в КЦ<br>підтвердил<br>и</div>
<div class="t" style="left:738px;top:532px;width:188px;height:80px;justify-content:flex-end;text-align:left;padding:0 20px 0px 4px;">є</div>
<div class="t" style="left:926px;top:532px;width:105px;height:80px;justify-content:flex-end;text-align:center;padding:0 18px 0px 0px;">немає<br>онлайн-чата<br>або не<br>відповіли<br>зовсім</div>
<div class="t" style="left:1031px;top:532px;width:110px;height:80px;justify-content:flex-end;text-align:center;padding:0 18px 0px 0px;">є, відповіли<br>протягом<br>години</div>
<div class="t" style="left:1141px;top:532px;width:103px;height:80px;justify-content:flex-end;text-align:left;padding:0 20px 0px 4px;">є</div>
<div class="t" style="left:1244px;top:532px;width:105px;height:80px;justify-content:flex-end;text-align:left;padding:0 20px 0px 4px;">є</div>
<div class="t" style="left:1349px;top:532px;width:106px;height:80px;justify-content:flex-end;text-align:left;padding:0 20px 0px 4px;">є</div>
<div class="t" style="left:1455px;top:532px;width:102px;height:80px;justify-content:flex-end;text-align:left;padding:0 20px 0px 4px;">немає</div>
<div class="t" style="left:1696px;top:532px;width:95px;height:80px;justify-content:flex-end;text-align:left;padding:0 20px 0px 4px;">є</div>
<div class="t" style="left:1791px;top:532px;width:57px;height:80px;justify-content:flex-end;text-align:left;padding:0 20px 0px 4px;">немає</div>
<div class="dd" style="left:399px;top:601px;border-top-color:#7a7a7a"></div>
<div class="dd" style="left:630px;top:601px;border-top-color:#7a7a7a"></div>
<div class="dd" style="left:725px;top:601px;border-top-color:#eaeaea"></div>
<div class="dd" style="left:913px;top:601px;border-top-color:#7a7a7a"></div>
<div class="dd" style="left:1018px;top:601px;border-top-color:#7a7a7a"></div>
<div class="dd" style="left:1128px;top:601px;border-top-color:#7a7a7a"></div>
<div class="dd" style="left:1231px;top:601px;border-top-color:#7a7a7a"></div>
<div class="dd" style="left:1336px;top:601px;border-top-color:#7a7a7a"></div>
<div class="dd" style="left:1442px;top:601px;border-top-color:#7a7a7a"></div>
<div class="dd" style="left:1544px;top:601px;border-top-color:#7a7a7a"></div>
<div class="dd" style="left:1778px;top:601px;border-top-color:#7a7a7a"></div>
<div class="t" style="left:334px;top:612px;width:78px;height:20px;justify-content:flex-end;text-align:right;padding:0 21px 0px 3px;">100%</div>
<div class="dd" style="left:399px;top:621px;border-top-color:#7a7a7a"></div>
<div class="dd" style="left:630px;top:621px;border-top-color:#7a7a7a"></div>
<div class="dd" style="left:725px;top:621px;border-top-color:#7a7a7a"></div>
<div class="dd" style="left:913px;top:621px;border-top-color:#7a7a7a"></div>
<div class="dd" style="left:1018px;top:621px;border-top-color:#7a7a7a"></div>
<div class="dd" style="left:1128px;top:621px;border-top-color:#7a7a7a"></div>
<div class="dd" style="left:1231px;top:621px;border-top-color:#7a7a7a"></div>
<div class="dd" style="left:1336px;top:621px;border-top-color:#7a7a7a"></div>
<div class="dd" style="left:1442px;top:621px;border-top-color:#7a7a7a"></div>
<div class="dd" style="left:1544px;top:621px;border-top-color:#7a7a7a"></div>
<div class="dd" style="left:1778px;top:621px;border-top-color:#7a7a7a"></div>
<div class="dd" style="left:399px;top:641px;border-top-color:#7a7a7a"></div>
<div class="dd" style="left:630px;top:641px;border-top-color:#7a7a7a"></div>
<div class="dd" style="left:725px;top:641px;border-top-color:#7a7a7a"></div>
<div class="dd" style="left:913px;top:641px;border-top-color:#7a7a7a"></div>
<div class="dd" style="left:1018px;top:641px;border-top-color:#7a7a7a"></div>
<div class="dd" style="left:1128px;top:641px;border-top-color:#7a7a7a"></div>
<div class="dd" style="left:1231px;top:641px;border-top-color:#7a7a7a"></div>
<div class="dd" style="left:1336px;top:641px;border-top-color:#7a7a7a"></div>
<div class="dd" style="left:1442px;top:641px;border-top-color:#7a7a7a"></div>
<div class="dd" style="left:1544px;top:641px;border-top-color:#7a7a7a"></div>
<div class="dd" style="left:1778px;top:641px;border-top-color:#7a7a7a"></div>
<div class="cm" style="left:637px;top:533px"></div>
<div class="cm" style="left:732px;top:533px"></div>
<div class="cm" style="left:1025px;top:533px"></div>
<div class="cm" style="left:1135px;top:533px"></div>
<div class="cm" style="left:1238px;top:533px"></div>
<div class="cm" style="left:1343px;top:533px"></div>
<div class="cm" style="left:1449px;top:533px"></div>
<div class="cm" style="left:1551px;top:533px"></div>
<div class="cm" style="left:1785px;top:533px"></div>
<div class="cm" style="left:920px;top:533px"></div>
<div class="t" style="left:643px;top:652px;width:95px;height:65px;justify-content:flex-end;text-align:left;padding:0 5px 0px 4px;color:#d9efc4">так, в КЦ<br>підтвердил<br>и</div>
<div class="t" style="left:738px;top:652px;width:188px;height:65px;justify-content:flex-end;text-align:left;padding:0 20px 0px 4px;"></div>
<div class="t" style="left:926px;top:652px;width:105px;height:65px;justify-content:flex-end;text-align:center;padding:0 18px 0px 0px;">є відповіді на<br>різні питання<br>(відповіли до<br>1 год.)</div>
<div class="t" style="left:1031px;top:652px;width:110px;height:65px;justify-content:flex-end;text-align:center;padding:0 18px 0px 0px;">є, відповіли<br>протягом<br>години</div>
<div class="t" style="left:1141px;top:652px;width:103px;height:65px;justify-content:flex-end;text-align:left;padding:0 20px 0px 4px;"></div>
<div class="t" style="left:1244px;top:652px;width:105px;height:65px;justify-content:flex-end;text-align:left;padding:0 20px 0px 4px;"></div>
<div class="t" style="left:1349px;top:652px;width:106px;height:65px;justify-content:flex-end;text-align:left;padding:0 20px 0px 4px;"></div>
<div class="t" style="left:1455px;top:652px;width:102px;height:65px;justify-content:flex-end;text-align:left;padding:0 20px 0px 4px;"></div>
<div class="t" style="left:1696px;top:652px;width:95px;height:65px;justify-content:flex-end;text-align:left;padding:0 20px 0px 4px;"></div>
<div class="t" style="left:1791px;top:652px;width:57px;height:65px;justify-content:flex-end;text-align:left;padding:0 20px 0px 4px;"></div>
<div class="dd" style="left:399px;top:706px;border-top-color:#7a7a7a"></div>
<div class="dd" style="left:630px;top:706px;border-top-color:#7a7a7a"></div>
<div class="dd" style="left:725px;top:706px;border-top-color:#eaeaea"></div>
<div class="dd" style="left:913px;top:706px;border-top-color:#7a7a7a"></div>
<div class="dd" style="left:1018px;top:706px;border-top-color:#7a7a7a"></div>
<div class="dd" style="left:1128px;top:706px;border-top-color:#7a7a7a"></div>
<div class="dd" style="left:1231px;top:706px;border-top-color:#7a7a7a"></div>
<div class="dd" style="left:1336px;top:706px;border-top-color:#7a7a7a"></div>
<div class="dd" style="left:1442px;top:706px;border-top-color:#7a7a7a"></div>
<div class="dd" style="left:1544px;top:706px;border-top-color:#7a7a7a"></div>
<div class="dd" style="left:1778px;top:706px;border-top-color:#7a7a7a"></div>
<div class="cm" style="left:637px;top:653px"></div>
<div class="cm" style="left:732px;top:653px"></div>
<div class="cm" style="left:1025px;top:653px"></div>
<div class="cm" style="left:1135px;top:653px"></div>
<div class="cm" style="left:1238px;top:653px"></div>
<div class="cm" style="left:1343px;top:653px"></div>
<div class="cm" style="left:1449px;top:653px"></div>
<div class="cm" style="left:1551px;top:653px"></div>
<div class="cm" style="left:1785px;top:653px"></div>
<div class="cm" style="left:920px;top:653px"></div>
</div>
<div class="a" style="left:34px;top:718px;width:1814px;height:81px;background:rgba(14,101,235,0.1);border-top:1px solid #1a73e8;border-bottom:1px solid #1a73e8;border-left:1px solid #1a73e8"></div>
<div style="position:absolute;left:330px;top:718px;width:4px;height:81px;background:rgba(14,101,235,0.0);"></div>
<div style="position:absolute;left:1849px;top:137px;width:11px;height:851px;background:#ffffff;"></div>
<div style="position:absolute;left:1849px;top:137px;width:11px;height:165px;background:#f8f9fa;"></div>
<div style="position:absolute;left:1849px;top:302px;width:11px;height:4px;background:#dde3ea;"></div>
<div class="a" style="left:1850px;top:590px;width:8px;height:55px;border-radius:4px;background:#dadce0"></div>
<div style="position:absolute;left:1849px;top:960px;width:11px;height:29px;background:#f8f9fa;"></div>
<div style="position:absolute;left:1849px;top:960px;width:11px;height:1px;background:#e3e3e3;"></div>
<div style="position:absolute;left:1849px;top:974px;width:11px;height:1px;background:#e3e3e3;"></div>
<div class="a" style="left:1851px;top:965px;width:0;height:0;border-left:3.5px solid transparent;border-right:3.5px solid transparent;border-bottom:3.5px solid #9e9e9e"></div>
<div class="a" style="left:1851px;top:980px;width:0;height:0;border-left:3.5px solid transparent;border-right:3.5px solid transparent;border-top:3.5px solid #9e9e9e"></div>
<div style="position:absolute;left:0px;top:988px;width:1860px;height:13px;background:#ffffff;"></div>
<div style="position:absolute;left:0px;top:989px;width:1860px;height:1px;background:#dadce0;"></div>
<div style="position:absolute;left:0px;top:990px;width:330px;height:10px;background:#f8f8f8;"></div>
<div style="position:absolute;left:330px;top:988px;width:4px;height:12px;background:#dde3ea;"></div>
<div class="a" style="left:991px;top:991px;width:539px;height:9px;border-radius:5px;background:#dadce0"></div>
<div style="position:absolute;left:1820px;top:990px;width:1px;height:10px;background:#e3e3e3;"></div>
<div style="position:absolute;left:1834px;top:990px;width:1px;height:10px;background:#e3e3e3;"></div>
<div style="position:absolute;left:1848px;top:990px;width:1px;height:10px;background:#e3e3e3;"></div>
<div style="position:absolute;left:1849px;top:990px;width:11px;height:10px;background:#f8f9fa;"></div>
<div class="a" style="left:1826px;top:992px;width:0;height:0;border-top:3.5px solid transparent;border-bottom:3.5px solid transparent;border-right:3.5px solid #9e9e9e"></div>
<div class="a" style="left:1841px;top:992px;width:0;height:0;border-top:3.5px solid transparent;border-bottom:3.5px solid transparent;border-left:3.5px solid #9e9e9e"></div>
<div style="position:absolute;left:0px;top:1000px;width:1860px;height:1px;background:#dadce0;"></div>
<div style="position:absolute;left:0px;top:1001px;width:1860px;height:34px;background:#f9fbfd;"></div>
<svg class="a" style="left:40px;top:1010px" width="18" height="18" viewBox="0 0 24 24"><path d="M19 13h-6v6h-2v-6H5v-2h6V5h2v6h6v2z" fill="#444746"/></svg>
<svg class="a" style="left:78px;top:1010px" width="18" height="18" viewBox="0 0 24 24"><path d="M3 18h18v-2H3v2zm0-5h18v-2H3v2zm0-7v2h18V6H3z" fill="#444746"/></svg>
<div style="position:absolute;left:118px;top:1002px;width:93px;height:31px;background:#e1e9f7;"></div>
<div style="position:absolute;left:118px;top:1032px;width:93px;height:3px;background:#e3170a;"></div>
<div class="a" style="left:130px;top:1010px;width:17px;height:17px;border-radius:50%;background:#fff;font-size:10px;line-height:17px;text-align:center;color:#1f1f1f">3</div>
<div class="ui" style="left:153px;top:1011px;font-size:14px;line-height:16px;color:#0b57d0;font-weight:bold">Збір</div>
<div class="a" style="left:193px;top:1017px;width:0;height:0;border-left:4px solid transparent;border-right:4px solid transparent;border-top:4px solid #0b57d0"></div>
<div class="ui" style="left:224px;top:1011px;font-size:14.5px;line-height:16.5px;color:#444746;">Методологія</div>
<div class="a" style="left:317px;top:1017px;width:0;height:0;border-left:4px solid transparent;border-right:4px solid transparent;border-top:4px solid #444746"></div>
<div class="ui" style="left:349px;top:1011px;font-size:14.4px;line-height:16.4px;color:#444746;">Цікаве про МФО</div>
<div class="a" style="left:469px;top:1017px;width:0;height:0;border-left:4px solid transparent;border-right:4px solid transparent;border-top:4px solid #444746"></div>
<div class="ui" style="left:500px;top:1011px;font-size:14.5px;line-height:16.5px;color:#444746;">як рахуємо бали</div>
<div class="a" style="left:623px;top:1017px;width:0;height:0;border-left:4px solid transparent;border-right:4px solid transparent;border-top:4px solid #444746"></div>
<div class="a" style="left:1713px;top:1005px;width:136px;height:27px;border-radius:6px;background:#c4eed0"></div>
<div class="ui" style="left:1723px;top:1010px;font-size:13.5px;line-height:15.5px;color:#0d3a1e;">Сумма: 38,0001</div>
<div class="a" style="left:1829px;top:1017px;width:0;height:0;border-left:4px solid transparent;border-right:4px solid transparent;border-top:4px solid #0d3a1e"></div>
<svg class="a" style="left:1876px;top:1001px" width="18" height="18" viewBox="0 0 24 24"><path d="M10 6L8.59 7.41 13.17 12l-4.58 4.59L10 18l6-6z" fill="#444746"/></svg>
<div style="position:absolute;left:1860px;top:60px;width:39px;height:941px;background:#f9fbfd;"></div>
<svg class="a" style="left:1876px;top:77px" width="18" height="18" viewBox="0 0 24 24"><rect x="1" y="1" width="22" height="22" rx="2" fill="#4285f4"/><rect x="4" y="5" width="16" height="15" fill="#fff"/><path d="M1 20h22v1a2 2 0 0 1-2 2H3a2 2 0 0 1-2-2z" fill="#34a853"/><path d="M18 18h5l-5 5z" fill="#ea4335"/><path d="M1 20h3v3H3a2 2 0 0 1-2-2z" fill="#188038"/><text x="12" y="17" font-size="9" font-family="Liberation Sans" font-weight="bold" fill="#4285f4" text-anchor="middle">31</text></svg>
<svg class="a" style="left:1876px;top:129px" width="19" height="19" viewBox="0 0 24 24"><rect x="1" y="1" width="22" height="22" rx="2" fill="#fbbc04"/><circle cx="12" cy="10" r="4.5" fill="#fff"/><rect x="10" y="14" width="4" height="4" fill="#fff"/></svg>
<svg class="a" style="left:1876px;top:181px" width="18" height="18" viewBox="0 0 24 24"><circle cx="11" cy="13" r="8.5" fill="none" stroke="#1a73e8" stroke-width="3"/><path d="M7 12.5l3.5 3.5L21 4" fill="none" stroke="#1a73e8" stroke-width="3"/></svg>
<svg class="a" style="left:1877px;top:234px" width="17" height="17" viewBox="0 0 24 24"><circle cx="12" cy="6.5" r="4.5" fill="#1a73e8"/><path d="M3 20a9 7 0 0 1 18 0v2H3z" fill="#1a73e8"/></svg>
<svg class="a" style="left:1876px;top:286px" width="18" height="18" viewBox="0 0 24 24"><path d="M12 1a8 8 0 0 0-8 8c0 6 8 14 8 14s8-8 8-14a8 8 0 0 0-8-8z" fill="#34a853"/><path d="M12 1a8 8 0 0 1 8 8c0 2-1 4-2 6L12 9z" fill="#ea4335"/><path d="M4 9a8 8 0 0 1 8-8L12 9z" fill="#4285f4"/><path d="M12 9l6 6c-1 2-3 4-3 4z" fill="#fbbc04"/><circle cx="12" cy="9" r="3" fill="#fff"/></svg>
<div style="position:absolute;left:1876px;top:336px;width:19px;height:1px;background:#c7c7c7;"></div>
<svg class="a" style="left:1876px;top:370px" width="19" height="19" viewBox="0 0 24 24"><path d="M19 13h-6v6h-2v-6H5v-2h6V5h2v6h6v2z" fill="#1f1f1f"/></svg>
<svg class="a" style="left:0;top:0" width="1899" height="1094" viewBox="0 0 1899 1094"><path d="M1495.5 611.5 L1445 718" stroke="#ff0f0f" stroke-width="3" stroke-linecap="round"/><path d="M1436.8 735.5 L1439.8 716.6 L1450 721.4 z" fill="#ff0f0f" stroke="#ff0f0f" stroke-width="1.2" stroke-linejoin="round"/></svg>
<div class="a" style="left:0;top:1035px;width:1899px;height:59px;background:linear-gradient(90deg,#202833 0%,#1f2a3c 25%,#1b2446 45%,#1c2545 60%,#1f2837 80%,#202833 100%)"></div>
<svg class="a" style="left:20px;top:1049px" width="24" height="30" viewBox="0 0 24 30"><rect x="1.5" y="1" width="10" height="20" rx="5" fill="#a8d8fa"/><circle cx="6.5" cy="22" r="6" fill="#a8d8fa"/><rect x="4.5" y="5" width="4" height="16" rx="2" fill="#e8708e"/><circle cx="6.5" cy="22" r="3.6" fill="#2f8ae0"/><path d="M16.5 3.5h5" stroke="#e8322a" stroke-width="2.2"/><path d="M19 25V10M15.8 13.2l3.2-4 3.2 4" stroke="#e8322a" stroke-width="2.2" fill="none"/></svg>
<div class="ui" style="left:57px;top:1045px;font-size:15.4px;line-height:17.4px;color:#ffffff;">Tomorrow's high</div>
<div class="ui" style="left:57px;top:1065px;font-size:15.3px;line-height:17.3px;color:#c9c9c9;">To tie record</div>
<svg class="a" style="left:423px;top:1050px" width="30" height="30" viewBox="0 0 30 30"><defs><linearGradient id="wg" x1="0" y1="0" x2="1" y2="1"><stop offset="0" stop-color="#6fd0ff"/><stop offset="1" stop-color="#1a8fe3"/></linearGradient></defs><rect x="0" y="0" width="14.3" height="14.3" rx="1" fill="url(#wg)"/><rect x="15.7" y="0" width="14.3" height="14.3" rx="1" fill="url(#wg)"/><rect x="0" y="15.7" width="14.3" height="14.3" rx="1" fill="url(#wg)"/><rect x="15.7" y="15.7" width="14.3" height="14.3" rx="1" fill="url(#wg)"/></svg>
<div class="a" style="left:469px;top:1045px;width:274px;height:40px;border-radius:20px;background:#2d3853;border:1px solid #3a4560"></div>
<svg class="a" style="left:482px;top:1055px" width="20" height="20" viewBox="0 0 24 24"><circle cx="9" cy="9" r="6.5" fill="none" stroke="#e8e8e8" stroke-width="2"/><path d="M14 14l6 6" stroke="#e8e8e8" stroke-width="2.2"/></svg>
<div class="ui" style="left:515px;top:1056px;font-size:14.5px;line-height:16.5px;color:#d6d6d6;line-height:18px">Пошук</div>
<svg class="a" style="left:678px;top:1050px" width="58" height="32" viewBox="0 0 58 32"><defs><clipPath id="auc"><ellipse cx="29" cy="16" rx="28" ry="15"/></clipPath><linearGradient id="aug" x1="0" y1="0" x2="0" y2="1"><stop offset="0" stop-color="#1a3358"/><stop offset="1" stop-color="#2a5a78"/></linearGradient></defs><g clip-path="url(#auc)"><rect width="58" height="32" fill="url(#aug)"/><path d="M6 8 C12 2 18 12 26 6 M24 4 C30 10 36 2 46 10" stroke="#46e6a0" stroke-width="3" fill="none" opacity="0.9"/><path d="M10 14 C18 10 22 18 30 12" stroke="#2fbf8a" stroke-width="2" fill="none" opacity="0.7"/><ellipse cx="29" cy="28" rx="26" ry="6" fill="#39c9c4"/><path d="M26 27 L30 14 L32 20 L34 12 L37 27 Z" fill="#10302a"/><ellipse cx="34" cy="27" rx="10" ry="2.5" fill="#10302a"/></g></svg>
<svg class="a" style="left:759px;top:1051px" width="31" height="28" viewBox="0 0 31 28"><rect x="10" y="2" width="19" height="17" rx="2" fill="#e9e9e9"/><rect x="2" y="9" width="19" height="17" rx="2" fill="#8a8a8a" opacity="0.9"/></svg>
<svg class="a" style="left:813px;top:1051px" width="32" height="28" viewBox="0 0 32 28"><path d="M1 3a2 2 0 0 1 2-2h9l3 3h14a2 2 0 0 1 2 2v19a2 2 0 0 1-2 2H3a2 2 0 0 1-2-2z" fill="#f5c43e"/><path d="M1 9h30v16a2 2 0 0 1-2 2H3a2 2 0 0 1-2-2z" fill="#ffd75e"/><rect x="9" y="20" width="14" height="3" rx="1" fill="#1d6fd6"/></svg>
<div style="position:absolute;left:826px;top:1085px;width:7px;height:3px;background:#9aa0a6;"></div>
<svg class="a" style="left:869px;top:1050px" width="30" height="30" viewBox="0 0 30 30"><ellipse cx="15" cy="15" rx="14" ry="14.5" fill="#e0162b"/><ellipse cx="15" cy="15" rx="6" ry="10.5" fill="#1b2446"/></svg>
<div style="position:absolute;left:881px;top:1085px;width:7px;height:3px;background:#9aa0a6;"></div>
<svg class="a" style="left:924px;top:1051px" width="30" height="28" viewBox="0 0 30 28"><defs><linearGradient id="cpl" x1="0" y1="0" x2="0" y2="1"><stop offset="0" stop-color="#2d9bf0"/><stop offset="0.6" stop-color="#4fc96a"/><stop offset="1" stop-color="#f2c230"/></linearGradient><linearGradient id="cpr" x1="0" y1="0" x2="0" y2="1"><stop offset="0" stop-color="#f06a8a"/><stop offset="1" stop-color="#a463f2"/></linearGradient></defs><path d="M9 2h9c-2 1-3 3-4 6l-4 14c-1 3-3 4-6 4H3c-2 0-3-2-2-4l5-16c1-3 2-4 3-4z" fill="url(#cpl)"/><path d="M21 26h-9c2-1 3-3 4-6l4-14c1-3 3-4 6-4h1c2 0 3 2 2 4l-5 16c-1 3-2 4-3 4z" fill="url(#cpr)"/></svg>
<svg class="a" style="left:978px;top:1050px" width="32" height="32" viewBox="0 0 32 32"><defs><linearGradient id="edg" x1="0" y1="1" x2="1" y2="0"><stop offset="0" stop-color="#0a57b8"/><stop offset="0.55" stop-color="#2ba3e8"/><stop offset="1" stop-color="#6fd86a"/></linearGradient></defs><circle cx="16" cy="16" r="15" fill="url(#edg)"/><path d="M5 22c2-7 8-10 14-8 4 1 6 4 5 6-1 2-5 2-8 0-3-2-3-6 0-8" fill="none" stroke="#1b2550" stroke-width="0"/><ellipse cx="17.5" cy="19" rx="6" ry="4.5" fill="#1b2550"/><path d="M3 18c2 9 12 14 21 10-6 1-12-2-13-8z" fill="#0c4ea0"/></svg>
<svg class="a" style="left:1033px;top:1050px" width="31" height="31" viewBox="0 0 31 31"><path d="M10 8V5a5 5 0 0 1 11 0v3" stroke="#41a5ee" stroke-width="2.5" fill="none"/><rect x="1" y="8" width="29" height="22" rx="3" fill="#f2f2f2"/><rect x="10" y="13" width="5" height="5" fill="#f25022"/><rect x="16" y="13" width="5" height="5" fill="#7fba00"/><rect x="10" y="19" width="5" height="5" fill="#00a4ef"/><rect x="16" y="19" width="5" height="5" fill="#ffb900"/></svg>
<svg class="a" style="left:1088px;top:1050px" width="32" height="32" viewBox="0 0 32 32"><rect x="1" y="1" width="30" height="30" fill="#e32b22"/><path d="M11 7h5v14h8v4H11z" fill="#fff"/></svg>
<div class="a" style="left:1103px;top:1044px;width:22px;height:22px;border-radius:50%;background:#4cc2ff;color:#0b1a30;font-size:13px;line-height:22px;text-align:center">1</div>
<svg class="a" style="left:1143px;top:1050px" width="31" height="31" viewBox="0 0 31 31"><circle cx="13" cy="6" r="4" fill="#8b8cf0"/><rect x="5" y="12" width="20" height="16" rx="5" fill="#7b83eb"/><rect x="1" y="15" width="13" height="13" rx="2" fill="#5059c9"/><path d="M4 18h7M7.5 18v7" stroke="#fff" stroke-width="2"/></svg>
<div class="a" style="left:1159px;top:1044px;width:22px;height:22px;border-radius:50%;background:#4cc2ff;color:#0b1a30;font-size:13px;line-height:22px;text-align:center">1</div>
<div style="position:absolute;left:1155px;top:1085px;width:7px;height:3px;background:#9aa0a6;"></div>
<svg class="a" style="left:1199px;top:1050px" width="31" height="31" viewBox="0 0 31 31"><rect x="0" y="0" width="31" height="31" fill="#0061fe"/><path d="M9 7l6 4-6 4-6-4zM22 7l6 4-6 4-6-4zM9 15l6 4-6 4-6-4zM22 15l6 4-6 4-6-4zM15.5 20l5 3.2-5 3.3-5-3.3z" fill="#fff"/></svg>
<div class="a" style="left:1244px;top:1041px;width:50px;height:48px;border-radius:5px;background:#2e3752"></div>
<svg class="a" style="left:1254px;top:1050px" width="31" height="31" viewBox="0 0 32 32"><circle cx="16" cy="16" r="15" fill="#db4437"/><path d="M16 16L3 23.5A15 15 0 0 1 3 8.5z" fill="#0f9d58"/><path d="M16 16L29 23.5A15 15 0 0 1 3 23.5z" fill="#0f9d58"/><path d="M16 16L16 31A15 15 0 0 0 29 23.5z" fill="#ffcd40"/><path d="M16 16L3 23.5A15 15 0 0 0 16 31z" fill="#0f9d58"/><circle cx="16" cy="16" r="7" fill="#fff"/><circle cx="16" cy="16" r="5.5" fill="#1a73e8"/></svg>
<div style="position:absolute;left:1259px;top:1086px;width:21px;height:3px;background:#4cc2ff;"></div>
<svg class="a" style="left:1309px;top:1050px" width="29" height="29" viewBox="0 0 29 29"><circle cx="14.5" cy="14.5" r="14" fill="#2aa3e0"/><path d="M6 14l16-6-3 14-5-4-3 3v-4l7-6-9 5z" fill="#fff"/></svg>
<div class="a" style="left:1326px;top:1045px;width:19px;height:19px;border-radius:50%;background:#6b6b6b;color:#fff;font-size:12px;line-height:19px;text-align:center">4</div>
<div style="position:absolute;left:1321px;top:1085px;width:7px;height:3px;background:#9aa0a6;"></div>
<svg class="a" style="left:1363px;top:1050px" width="31" height="31" viewBox="0 0 31 31"><circle cx="15.5" cy="15.5" r="15" fill="#76bb40"/><path d="M10 8 V24 M10 17 A4.5 4.5 0 0 0 19 17 V8 M19 17 V20 A2 2 0 0 0 22 21" stroke="#fff" stroke-width="3" fill="none"/></svg>
<svg class="a" style="left:1419px;top:1050px" width="30" height="31" viewBox="0 0 30 31"><path d="M15 1C6 1 2 5 2 13c0 5 1 8 4 10v6l4-4c2 .5 3 .5 5 .5 9 0 13-4 13-12.5S24 1 15 1z" fill="#7360f2"/><path d="M15 4c-7 0-10 3-10 9 0 4 1 6 3 8v3l3-3c1.5.3 2.5.3 4 .3 7 0 10-3 10-8.5S22 4 15 4z" fill="#fff"/><path d="M10 9c1-1 2 0 2.5 1.5s-1 1.5 0 3 2 2.5 3.5 2.5 1.5-1.5 3-.5 1 2-.5 2.5C15 19 9 14 10 9z" fill="#7360f2"/></svg>
<svg class="a" style="left:1540px;top:1055px" width="24" height="20" viewBox="1540 1055 24 20"><path d="M1546 1070 L1553 1063 L1560 1070" fill="none" stroke="#fff" stroke-width="1.8"/></svg>
<svg class="a" style="left:1581px;top:1053px" width="24" height="24" viewBox="0 0 24 24"><path d="M6 18a5 5 0 0 1 0-10 6 6 0 0 1 11 1 4 4 0 0 1 1 9z" fill="#d0d0d0"/><circle cx="17" cy="17" r="5.5" fill="#1a73e8"/><path d="M17 14v.5M17 16v4" stroke="#fff" stroke-width="1.6"/></svg>
<div class="ui" style="left:1628px;top:1058px;font-size:14px;line-height:16px;color:#ffffff;">УКР</div>
<svg class="a" style="left:1677px;top:1054px" width="22" height="20" viewBox="0 0 22 20"><path d="M1 7a15 15 0 0 1 20 0M4 10.5a10.5 10.5 0 0 1 14 0M7 14a6 6 0 0 1 8 0" stroke="#fff" stroke-width="2" fill="none"/><circle cx="11" cy="17" r="1.8" fill="#fff"/></svg>
<svg class="a" style="left:1707px;top:1055px" width="22" height="20" viewBox="0 0 22 20"><path d="M2 7h4l5-5v16l-5-5H2z" fill="none" stroke="#fff" stroke-width="1.6"/><path d="M14 6a5 5 0 0 1 0 8" stroke="#fff" stroke-width="1.6" fill="none"/><path d="M17 3a9 9 0 0 1 0 14" stroke="#888" stroke-width="1.6" fill="none"/></svg>
<svg class="a" style="left:1738px;top:1057px" width="26" height="14" viewBox="0 0 26 14"><rect x="1" y="1" width="22" height="12" rx="3" fill="none" stroke="#fff" stroke-width="1.5"/><rect x="3" y="3" width="11" height="8" rx="1" fill="#fff"/><rect x="24" y="5" width="1.5" height="4" fill="#fff"/></svg>
<div class="ui" style="left:1767px;top:1058px;font-size:14.5px;line-height:16.5px;color:#ffffff;">57%</div>
<div class="ui" style="left:1780px;top:1046px;width:108px;text-align:right;font-size:14.5px;line-height:17px;color:#fff">14:21</div>
<div class="ui" style="left:1780px;top:1066px;width:108px;text-align:right;font-size:14px;line-height:17px;color:#fff">27.03.2026</div>
</body></html>
